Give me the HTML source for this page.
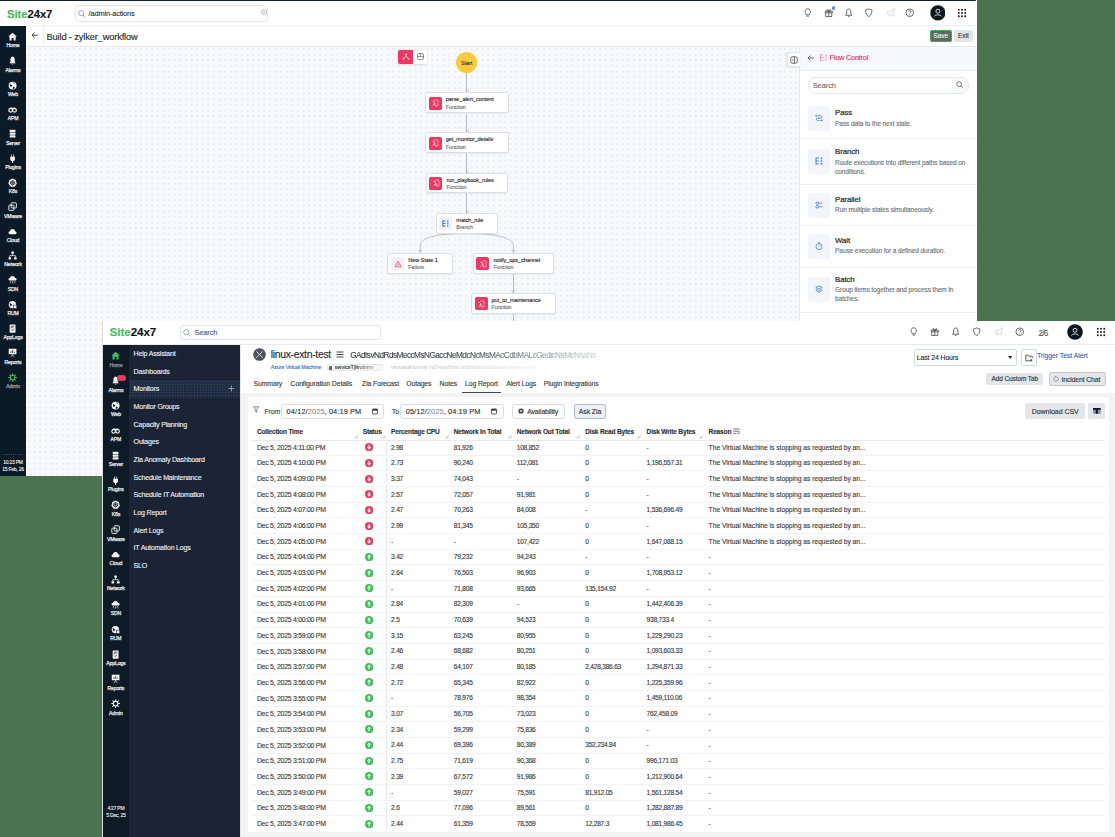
<!DOCTYPE html><html><head><meta charset="utf-8"><style>
html,body{margin:0;padding:0;}
body{width:1115px;height:837px;overflow:hidden;position:relative;background:#49744f;font-family:"Liberation Sans",sans-serif;}
.t{position:absolute;white-space:nowrap;-webkit-text-stroke-width:0.12px;}
.r{position:absolute;box-sizing:border-box;}
.dots{background-color:#f7f9fc;background-image:radial-gradient(circle at 50% 50%, #b9bec6 0.55px, rgba(185,190,198,0) 0.95px);background-size:5.59px 5.59px;}
</style></head><body>

<div class="r" style="left:0.00px;top:0.00px;width:977.00px;height:476.00px;background:#fff"></div>
<div class="r" style="left:0.00px;top:0.00px;width:976.00px;height:1.40px;background:#17212c;border-radius:0 0 2px 0"></div>
<div class="r" style="left:26.00px;top:24.80px;width:951.00px;height:1.00px;background:#eceef1"></div>
<div class="t" style="left:6.90px;top:9.00px;font-size:11.3px;line-height:11.3px;color:#111;font-weight:700;letter-spacing:-0.05px;"><span style="color:#3fbb5c">Site</span><span style="color:#111">24x7</span></div>
<div class="r" style="left:74.70px;top:5.20px;width:193.80px;height:16.50px;background:#fff;border:1px solid #e4e6e9;border-radius:3.5px"></div>
<svg class="r" style="left:78.00px;top:9.60px;" width="7.6" height="7.6" viewBox="0 0 7.6 7.6"><circle cx="3.2" cy="3.2" r="2.5" fill="none" stroke="#8a8f96" stroke-width="0.8"/><path d="M5 5 L7 7" stroke="#8a8f96" stroke-width="0.8"/></svg>
<div class="t" style="left:88.60px;top:10.00px;font-size:7.4px;line-height:7.4px;color:#2b2f34;font-weight:400;letter-spacing:-0.15px;">/admin-actions</div>
<svg class="r" style="left:260.50px;top:9.40px;" width="6.4" height="6.4" viewBox="0 0 6.4 6.4"><circle cx="3.2" cy="3.2" r="2.6" fill="none" stroke="#9a9ea4" stroke-width="0.7"/><path d="M2.2 2.2 L4.2 4.2 M4.2 2.2 L2.2 4.2" stroke="#9a9ea4" stroke-width="0.6"/></svg>
<svg class="r" style="left:803.15px;top:8.05px;" width="9.5" height="9.5" viewBox="0 0 10 10"><path d="M3.4 7.2 C3.4 6 2.2 5.4 2.2 3.6 C2.2 2 3.4 0.8 5 0.8 C6.6 0.8 7.8 2 7.8 3.6 C7.8 5.4 6.6 6 6.6 7.2 Z M3.8 8.6 H6.2" fill="none" stroke="#3a3f45" stroke-width="0.8"/></svg>
<svg class="r" style="left:824.05px;top:8.05px;" width="9.5" height="9.5" viewBox="0 0 10 10"><path d="M1.2 3.4 H8.8 V5 H1.2Z M1.8 5 V9 H8.2 V5 M5 3.4 V9 M5 3.4 C4 1 2.6 1.4 3 2.6 C3.2 3.2 4.4 3.4 5 3.4 C5.6 3.4 6.8 3.2 7 2.6 C7.4 1.4 6 1 5 3.4" fill="none" stroke="#3a3f45" stroke-width="0.8"/></svg>
<svg class="r" style="left:844.35px;top:8.05px;" width="9.5" height="9.5" viewBox="0 0 10 10"><path d="M5 1 C3.2 1.2 2.8 2.6 2.8 4.2 L2.8 6.2 L1.6 7.6 L8.4 7.6 L7.2 6.2 L7.2 4.2 C7.2 2.6 6.8 1.2 5 1Z M4 8.6 C4.4 9.2 5.6 9.2 6 8.6" fill="none" stroke="#3a3f45" stroke-width="0.8"/></svg>
<svg class="r" style="left:864.45px;top:8.05px;" width="9.5" height="9.5" viewBox="0 0 10 10"><path d="M5 0.9 L8.4 2.2 C8.4 5.6 7.2 7.8 5 9.1 C2.8 7.8 1.6 5.6 1.6 2.2 Z" fill="none" stroke="#3a3f45" stroke-width="0.8"/></svg>
<svg class="r" style="left:885.75px;top:8.05px;" width="9.5" height="9.5" viewBox="0 0 10 10"><path d="M1.4 4 L1.4 6.4 L3 6.4 L7.6 8.6 L7.6 1.8 L3 4 Z M3 6.4 L3.8 9" fill="none" stroke="#cfd2d6" stroke-width="0.8"/><circle cx="8.6" cy="1.2" r="1.1" fill="#d9dce0"/></svg>
<svg class="r" style="left:905.35px;top:8.05px;" width="9.5" height="9.5" viewBox="0 0 10 10"><circle cx="5" cy="5" r="4" fill="none" stroke="#3a3f45" stroke-width="0.8"/><path d="M3.7 3.9 C3.7 2.4 6.3 2.4 6.3 3.9 C6.3 4.9 5 4.9 5 6" fill="none" stroke="#3a3f45" stroke-width="0.8"/><circle cx="5" cy="7.3" r="0.5" fill="#3a3f45"/></svg>
<div class="r" style="left:831.8px;top:6.2px;width:3.4px;height:3.4px;border-radius:50%;background:#5b8de8"></div>
<svg class="r" style="left:929.50px;top:4.90px;" width="15.8" height="15.8" viewBox="0 0 15.8 15.8"><circle cx="7.9" cy="7.9" r="7.6" fill="#0c141c" stroke="#3f9a55" stroke-width="0.5" stroke-dasharray="1 1"/><circle cx="7.9" cy="6.2" r="2" fill="none" stroke="#fff" stroke-width="0.8"/><path d="M4.4 11.4 C4.6 9.4 11.2 9.4 11.4 11.4" fill="none" stroke="#fff" stroke-width="0.8"/></svg>
<svg class="r" style="left:956.80px;top:7.90px;" width="10" height="10" viewBox="0 0 10 10"><circle cx="1.8" cy="1.8" r="0.95" fill="#111"/><circle cx="1.8" cy="5.0" r="0.95" fill="#111"/><circle cx="1.8" cy="8.2" r="0.95" fill="#111"/><circle cx="5.0" cy="1.8" r="0.95" fill="#111"/><circle cx="5.0" cy="5.0" r="0.95" fill="#111"/><circle cx="5.0" cy="8.2" r="0.95" fill="#111"/><circle cx="8.2" cy="1.8" r="0.95" fill="#111"/><circle cx="8.2" cy="5.0" r="0.95" fill="#111"/><circle cx="8.2" cy="8.2" r="0.95" fill="#111"/></svg>
<div class="r" style="left:0.00px;top:26.00px;width:26.00px;height:450.00px;background:#0b1a26"></div>
<svg class="r" style="left:8.40px;top:31.80px;" width="9.2" height="9.2" viewBox="0 0 10 10"><path d="M5 0.8 L9.6 4.9 L8.3 4.9 L8.3 9.2 L6.1 9.2 L6.1 6.6 L3.9 6.6 L3.9 9.2 L1.7 9.2 L1.7 4.9 L0.4 4.9 Z" fill="#f2f3f4"/></svg>
<div class="t" style="left:-2.00px;width:30px;text-align:center;top:43.00px;font-size:5.1px;line-height:5.1px;color:#e9ebed;font-weight:400;letter-spacing:-0.15px;-webkit-text-stroke-width:0.25px;">Home</div>
<svg class="r" style="left:8.40px;top:56.16px;" width="9.2" height="9.2" viewBox="0 0 10 10"><path d="M5 0.6 C3.2 0.9 2.6 2.4 2.6 4.2 L2.6 6.4 L1.4 7.9 L8.6 7.9 L7.4 6.4 L7.4 4.2 C7.4 2.4 6.8 0.9 5 0.6 Z M3.9 8.5 L6.1 8.5 C6 9.4 4 9.4 3.9 8.5Z" fill="#f2f3f4"/></svg>
<div class="t" style="left:-2.00px;width:30px;text-align:center;top:68.00px;font-size:5.1px;line-height:5.1px;color:#e9ebed;font-weight:400;letter-spacing:-0.15px;-webkit-text-stroke-width:0.25px;">Alarms</div>
<svg class="r" style="left:8.40px;top:80.52px;" width="9.2" height="9.2" viewBox="0 0 10 10"><circle cx="5" cy="5" r="4.3" fill="#f2f3f4"/><path d="M2.2 3.2 C3.2 3.4 3.6 4.3 4.6 4.6 C4.6 5.6 3.6 5.8 3.2 6.8 C2.4 6 1.8 4.4 2.2 3.2Z M6 1.4 C5.6 2.4 6.4 3 7.4 2.8 C7.8 2.6 6.8 1.6 6 1.4Z M5.6 6.2 C6.6 6.2 7.6 6.6 7.4 7.6 C6.8 8.4 5.8 8.8 5.2 8.6 C5.6 7.8 5 7 5.6 6.2Z" fill="#0b1a26"/></svg>
<div class="t" style="left:-2.00px;width:30px;text-align:center;top:92.00px;font-size:5.1px;line-height:5.1px;color:#e9ebed;font-weight:400;letter-spacing:-0.15px;-webkit-text-stroke-width:0.25px;">Web</div>
<svg class="r" style="left:8.40px;top:104.88px;" width="9.2" height="9.2" viewBox="0 0 10 10"><g fill="none" stroke="#f2f3f4" stroke-width="1.3"><circle cx="2.9" cy="5.8" r="2"/><circle cx="7.1" cy="5.8" r="2"/></g><path d="M1.2 4.6 C1.6 2.8 3 2.4 5 3.2 C7 2.4 8.4 2.8 8.8 4.6 L5 4.4Z" fill="#f2f3f4"/></svg>
<div class="t" style="left:-2.00px;width:30px;text-align:center;top:116.00px;font-size:5.1px;line-height:5.1px;color:#e9ebed;font-weight:400;letter-spacing:-0.15px;-webkit-text-stroke-width:0.25px;">APM</div>
<svg class="r" style="left:8.40px;top:129.24px;" width="9.2" height="9.2" viewBox="0 0 10 10"><g fill="#f2f3f4"><rect x="1.8" y="0.8" width="6.4" height="2.4" rx="0.7"/><rect x="1.8" y="3.8" width="6.4" height="2.4" rx="0.7"/><rect x="1.8" y="6.8" width="6.4" height="2.4" rx="0.7"/></g></svg>
<div class="t" style="left:-2.00px;width:30px;text-align:center;top:141.00px;font-size:5.1px;line-height:5.1px;color:#e9ebed;font-weight:400;letter-spacing:-0.15px;-webkit-text-stroke-width:0.25px;">Server</div>
<svg class="r" style="left:8.40px;top:153.60px;" width="9.2" height="9.2" viewBox="0 0 10 10"><path d="M3.4 0.6 L3.4 3 L2.4 3 L2.4 5.6 C2.4 6.8 3.4 7.4 4.4 7.6 L4.4 9.6 L5.6 9.6 L5.6 7.6 C6.6 7.4 7.6 6.8 7.6 5.6 L7.6 3 L6.6 3 L6.6 0.6 L5.8 0.6 L5.8 3 L4.2 3 L4.2 0.6Z" fill="#f2f3f4"/></svg>
<div class="t" style="left:-2.00px;width:30px;text-align:center;top:165.00px;font-size:5.1px;line-height:5.1px;color:#e9ebed;font-weight:400;letter-spacing:-0.15px;-webkit-text-stroke-width:0.25px;">Plugins</div>
<svg class="r" style="left:8.40px;top:177.96px;" width="9.2" height="9.2" viewBox="0 0 10 10"><path d="M5 0.5 L8.6 2.3 L9.5 6.2 L7 9.4 L3 9.4 L0.5 6.2 L1.4 2.3Z" fill="#f2f3f4"/><circle cx="5" cy="5.2" r="2.2" fill="none" stroke="#0b1a26" stroke-width="0.8"/><path d="M5 2 L5 8.4 M2 4.2 L8 6.2 M8 4.2 L2 6.2" stroke="#0b1a26" stroke-width="0.6"/></svg>
<div class="t" style="left:-2.00px;width:30px;text-align:center;top:189.00px;font-size:5.1px;line-height:5.1px;color:#e9ebed;font-weight:400;letter-spacing:-0.15px;-webkit-text-stroke-width:0.25px;">K8s</div>
<svg class="r" style="left:8.40px;top:202.32px;" width="9.2" height="9.2" viewBox="0 0 10 10"><g fill="none" stroke="#f2f3f4" stroke-width="1"><rect x="3.5" y="0.9" width="5.6" height="5.6" rx="0.6"/><rect x="0.9" y="3.5" width="5.6" height="5.6" rx="0.6"/></g></svg>
<div class="t" style="left:-2.00px;width:30px;text-align:center;top:214.00px;font-size:5.1px;line-height:5.1px;color:#e9ebed;font-weight:400;letter-spacing:-0.15px;-webkit-text-stroke-width:0.25px;">VMware</div>
<svg class="r" style="left:8.40px;top:226.68px;" width="9.2" height="9.2" viewBox="0 0 10 10"><path d="M2.6 8 C1.2 8 0.6 7 0.6 6.2 C0.6 5.2 1.4 4.6 2.2 4.6 C2.4 3 3.6 2.2 5 2.2 C6.6 2.2 7.6 3.4 7.8 4.6 C8.8 4.6 9.4 5.4 9.4 6.3 C9.4 7.2 8.7 8 7.6 8Z" fill="#f2f3f4"/></svg>
<div class="t" style="left:-2.00px;width:30px;text-align:center;top:238.00px;font-size:5.1px;line-height:5.1px;color:#e9ebed;font-weight:400;letter-spacing:-0.15px;-webkit-text-stroke-width:0.25px;">Cloud</div>
<svg class="r" style="left:8.40px;top:251.04px;" width="9.2" height="9.2" viewBox="0 0 10 10"><g fill="#f2f3f4"><rect x="3.6" y="0.6" width="2.8" height="2.4"/><rect x="0.6" y="6.8" width="2.8" height="2.4"/><rect x="6.6" y="6.8" width="2.8" height="2.4"/></g><path d="M5 3 L5 5 M2 6.8 L2 5 L8 5 L8 6.8" fill="none" stroke="#f2f3f4" stroke-width="0.8"/></svg>
<div class="t" style="left:-2.00px;width:30px;text-align:center;top:262.00px;font-size:5.1px;line-height:5.1px;color:#e9ebed;font-weight:400;letter-spacing:-0.15px;-webkit-text-stroke-width:0.25px;">Network</div>
<svg class="r" style="left:8.40px;top:275.40px;" width="9.2" height="9.2" viewBox="0 0 10 10"><path d="M2.4 6 C1.2 6 0.6 5.2 0.6 4.5 C0.6 3.7 1.2 3.2 2 3.2 C2.2 1.8 3.4 1 4.8 1 C6.4 1 7.4 2 7.6 3.2 C8.6 3.2 9.4 3.8 9.4 4.6 C9.4 5.4 8.8 6 7.8 6Z" fill="#f2f3f4"/><path d="M3 6.4 L2.4 9 M5 6.4 L5 9.4 M7 6.4 L7.6 9" stroke="#f2f3f4" stroke-width="0.7"/></svg>
<div class="t" style="left:-2.00px;width:30px;text-align:center;top:287.00px;font-size:5.1px;line-height:5.1px;color:#e9ebed;font-weight:400;letter-spacing:-0.15px;-webkit-text-stroke-width:0.25px;">SDN</div>
<svg class="r" style="left:8.40px;top:299.76px;" width="9.2" height="9.2" viewBox="0 0 10 10"><circle cx="4.8" cy="5" r="4" fill="#f2f3f4"/><path d="M2 3.4 C3 3.6 3.6 4.6 4.4 4.8 C4.2 6 3.2 6 2.8 7 C2 6 1.6 4.6 2 3.4Z" fill="#0b1a26"/><rect x="6" y="5.6" width="3.6" height="3.6" fill="#f2f3f4" stroke="#0b1a26" stroke-width="0.6"/></svg>
<div class="t" style="left:-2.00px;width:30px;text-align:center;top:311.00px;font-size:5.1px;line-height:5.1px;color:#e9ebed;font-weight:400;letter-spacing:-0.15px;-webkit-text-stroke-width:0.25px;">RUM</div>
<svg class="r" style="left:8.40px;top:324.12px;" width="9.2" height="9.2" viewBox="0 0 10 10"><rect x="1.8" y="0.6" width="6.4" height="8.8" rx="0.6" fill="#f2f3f4"/><path d="M3 2.4 H7 M3 4 H5.5 M3.4 6.2 L4.4 7.2 L6.6 5.2" stroke="#0b1a26" stroke-width="0.7" fill="none"/></svg>
<div class="t" style="left:-2.00px;width:30px;text-align:center;top:335.00px;font-size:5.1px;line-height:5.1px;color:#e9ebed;font-weight:400;letter-spacing:-0.15px;-webkit-text-stroke-width:0.25px;">AppLogs</div>
<svg class="r" style="left:8.40px;top:348.48px;" width="9.2" height="9.2" viewBox="0 0 10 10"><rect x="0.8" y="0.8" width="8.4" height="6" fill="#f2f3f4"/><path d="M3.2 5.4 L3.2 3.6 M5 5.4 L5 2.2 M6.8 5.4 L6.8 4" stroke="#0b1a26" stroke-width="0.8"/><path d="M5 6.8 L5 8 M3 9.6 L5 7.8 L7 9.6" stroke="#f2f3f4" stroke-width="0.8" fill="none"/></svg>
<div class="t" style="left:-2.00px;width:30px;text-align:center;top:360.00px;font-size:5.1px;line-height:5.1px;color:#e9ebed;font-weight:400;letter-spacing:-0.15px;-webkit-text-stroke-width:0.25px;">Reports</div>
<svg class="r" style="left:8.40px;top:372.84px;" width="9.2" height="9.2" viewBox="0 0 10 10"><g stroke="#3dbb5a" stroke-width="1.1" stroke-linecap="round"><line x1="7.60" y1="5.00" x2="9.30" y2="5.00"/><line x1="6.84" y1="6.84" x2="8.04" y2="8.04"/><line x1="5.00" y1="7.60" x2="5.00" y2="9.30"/><line x1="3.16" y1="6.84" x2="1.96" y2="8.04"/><line x1="2.40" y1="5.00" x2="0.70" y2="5.00"/><line x1="3.16" y1="3.16" x2="1.96" y2="1.96"/><line x1="5.00" y1="2.40" x2="5.00" y2="0.70"/><line x1="6.84" y1="3.16" x2="8.04" y2="1.96"/></g><circle cx="5" cy="5" r="2.5" fill="none" stroke="#3dbb5a" stroke-width="1.1"/></svg>
<div class="t" style="left:-2.00px;width:30px;text-align:center;top:384.00px;font-size:5.1px;line-height:5.1px;color:#9aa3ab;font-weight:400;letter-spacing:-0.15px;-webkit-text-stroke-width:0.25px;">Admin</div>
<div class="r" style="left:3.00px;top:454.40px;width:20.00px;height:0.80px;background-image:linear-gradient(90deg,#3a4a58 50%,transparent 50%);background-size:2px 1px"></div>
<div class="t" style="left:-2.00px;width:30px;text-align:center;top:460.00px;font-size:5px;line-height:5px;color:#f0f0f0;font-weight:400;letter-spacing:-0.25px;">10:23 PM</div>
<div class="t" style="left:-2.00px;width:30px;text-align:center;top:467.00px;font-size:5px;line-height:5px;color:#f0f0f0;font-weight:400;letter-spacing:-0.25px;">15 Feb, 26</div>
<div class="r" style="left:26.00px;top:46.00px;width:951.00px;height:0.80px;background:#e6e9ed"></div>
<div class="r" style="left:43.30px;top:26.00px;width:0.80px;height:20.00px;background:#eceef1"></div>
<svg class="r" style="left:30.80px;top:32.40px;" width="7.4" height="6.4" viewBox="0 0 7.4 6.4"><path d="M6.8 3.2 H1 M3.6 0.6 L1 3.2 L3.6 5.8" fill="none" stroke="#2b2f33" stroke-width="0.9"/></svg>
<div class="t" style="left:46.50px;top:33.00px;font-size:9.3px;line-height:9.3px;color:#24282c;font-weight:400;letter-spacing:-0.15px;">Build - zylker_workflow</div>
<div class="r" style="left:930.00px;top:29.80px;width:21.50px;height:11.90px;background:#5d6b61;border:1px dotted #3bd35e;border-radius:2px"></div>
<div class="t" style="left:929.75px;width:22px;text-align:center;top:33.00px;font-size:6.4px;line-height:6.4px;color:#f2f2f2;font-weight:400;letter-spacing:0px;">Save</div>
<div class="r" style="left:954.30px;top:29.90px;width:18.30px;height:11.80px;background:#e4e5e7;border-radius:2px"></div>
<div class="t" style="left:953.45px;width:20px;text-align:center;top:33.00px;font-size:6.4px;line-height:6.4px;color:#333;font-weight:400;letter-spacing:0px;">Exit</div>
<div class="r" style="left:26.00px;top:46.80px;width:774.00px;height:429.20px;background-color:#f7f9fc"></div>
<svg class="r" style="left:26px;top:46.8px" width="774" height="429.2"><defs><pattern id="dp" x="0.3" y="-0.9" width="5.6" height="5.6" patternUnits="userSpaceOnUse"><circle cx="2.8" cy="2.8" r="0.55" fill="#b4b9c0"/></pattern></defs><rect width="774" height="429.2" fill="url(#dp)"/></svg>
<div class="r" style="left:398.30px;top:50.20px;width:28.90px;height:13.50px;background:#fff;border-radius:2px;box-shadow:0 0.5px 2px rgba(0,0,0,0.12)"></div>
<div class="r" style="left:398.30px;top:50.20px;width:14.60px;height:13.50px;background:#ea3a63;border-radius:2px 0 0 2px"></div>
<svg class="r" style="left:401.60px;top:53.40px;" width="8" height="7" viewBox="0 0 8 7"><path d="M4 1 V3.4 M4 3.4 L1.6 5.6 M4 3.4 L6.4 5.6" stroke="#fff" stroke-width="0.7" fill="none"/><circle cx="4" cy="1.2" r="0.8" fill="#fff"/><circle cx="1.4" cy="5.8" r="0.8" fill="#fff"/><circle cx="6.6" cy="5.8" r="0.8" fill="#fff"/></svg>
<svg class="r" style="left:416.60px;top:53.40px;" width="7" height="7" viewBox="0 0 7 7"><rect x="0.6" y="0.6" width="5.8" height="5.8" rx="0.8" fill="none" stroke="#555" stroke-width="0.7"/><path d="M0.6 3.5 H6.4 M3.5 0.6 V3.5" stroke="#555" stroke-width="0.6"/></svg>
<div class="r" style="left:466.25px;top:73.00px;width:0.90px;height:19.60px;background:#b9bdc3"></div>
<svg class="r" style="left:464.50px;top:89.20px;" width="4.4" height="3.4" viewBox="0 0 4.4 3.4"><path d="M0.4 0.4 L2.2 3 L4 0.4" fill="none" stroke="#b9bdc3" stroke-width="0.9"/></svg>
<div class="r" style="left:466.25px;top:113.50px;width:0.90px;height:19.10px;background:#b9bdc3"></div>
<svg class="r" style="left:464.50px;top:129.20px;" width="4.4" height="3.4" viewBox="0 0 4.4 3.4"><path d="M0.4 0.4 L2.2 3 L4 0.4" fill="none" stroke="#b9bdc3" stroke-width="0.9"/></svg>
<div class="r" style="left:466.45px;top:153.40px;width:0.90px;height:19.50px;background:#b9bdc3"></div>
<svg class="r" style="left:464.70px;top:169.50px;" width="4.4" height="3.4" viewBox="0 0 4.4 3.4"><path d="M0.4 0.4 L2.2 3 L4 0.4" fill="none" stroke="#b9bdc3" stroke-width="0.9"/></svg>
<div class="r" style="left:466.45px;top:193.30px;width:0.90px;height:19.60px;background:#b9bdc3"></div>
<svg class="r" style="left:464.70px;top:209.50px;" width="4.4" height="3.4" viewBox="0 0 4.4 3.4"><path d="M0.4 0.4 L2.2 3 L4 0.4" fill="none" stroke="#b9bdc3" stroke-width="0.9"/></svg>
<svg class="r" style="left:410.00px;top:230.00px;" width="115" height="25" viewBox="0 0 115 25"><path d="M56 3.5 Q10.2 3.5 10.2 16 L10.2 22.5 M56 3.5 Q103.5 3.5 103.5 16 L103.5 22.5" fill="none" stroke="#b9bdc3" stroke-width="0.9"/><path d="M8.4 19.6 L10.2 22.3 L12 19.6 M101.7 19.6 L103.5 22.3 L105.3 19.6" fill="none" stroke="#b9bdc3" stroke-width="0.9"/></svg>
<div class="r" style="left:513.05px;top:273.70px;width:0.90px;height:19.40px;background:#b9bdc3"></div>
<svg class="r" style="left:511.30px;top:289.70px;" width="4.4" height="3.4" viewBox="0 0 4.4 3.4"><path d="M0.4 0.4 L2.2 3 L4 0.4" fill="none" stroke="#b9bdc3" stroke-width="0.9"/></svg>
<div class="r" style="left:513.05px;top:313.90px;width:0.90px;height:16.10px;background:#b9bdc3"></div>
<svg class="r" style="left:456.10px;top:51.90px;" width="21.2" height="21.2" viewBox="0 0 21.2 21.2"><circle cx="10.6" cy="10.6" r="10.6" fill="#fdc93e"/></svg>
<div class="t" style="left:454.70px;width:24px;text-align:center;top:61.00px;font-size:5.6px;line-height:5.6px;color:#283548;font-weight:400;letter-spacing:-0.1px;">Start</div>
<div class="r" style="left:425.00px;top:92.40px;width:83.80px;height:21.10px;background:#fff;border:1px solid #dcdfe4;border-radius:2.5px;box-shadow:0 0.5px 1.5px rgba(0,0,0,0.06)"></div>
<div class="r" style="left:428.70px;top:96.60px;width:13.10px;height:13.20px;background:#ea3a63;border-radius:1.8px"></div>
<svg class="r" style="left:431.20px;top:99.10px;" width="8" height="8" viewBox="0 0 8 8"><path d="M3.2 1 H7 V7 H3.6" fill="none" stroke="#fff" stroke-width="0.7" stroke-dasharray="1 0.5"/><path d="M1.6 2.4 C3 2.2 3.4 2.8 3.8 4.6 C4 5.8 4.2 6.4 5.2 6.4 M4 4 L1.8 6.6" fill="none" stroke="#fff" stroke-width="0.8"/></svg>
<div class="t" style="left:445.80px;top:97.00px;font-size:5.6px;line-height:5.6px;color:#1f2226;font-weight:400;letter-spacing:-0.08px;">parse_alert_content</div>
<div class="t" style="left:445.80px;top:105.00px;font-size:5.3px;line-height:5.3px;color:#666b71;font-weight:400;letter-spacing:-0.05px;">Function</div>
<div class="r" style="left:425.00px;top:132.40px;width:83.80px;height:21.00px;background:#fff;border:1px solid #dcdfe4;border-radius:2.5px;box-shadow:0 0.5px 1.5px rgba(0,0,0,0.06)"></div>
<div class="r" style="left:428.70px;top:136.60px;width:13.10px;height:13.20px;background:#ea3a63;border-radius:1.8px"></div>
<svg class="r" style="left:431.20px;top:139.10px;" width="8" height="8" viewBox="0 0 8 8"><path d="M3.2 1 H7 V7 H3.6" fill="none" stroke="#fff" stroke-width="0.7" stroke-dasharray="1 0.5"/><path d="M1.6 2.4 C3 2.2 3.4 2.8 3.8 4.6 C4 5.8 4.2 6.4 5.2 6.4 M4 4 L1.8 6.6" fill="none" stroke="#fff" stroke-width="0.8"/></svg>
<div class="t" style="left:445.80px;top:137.00px;font-size:5.6px;line-height:5.6px;color:#1f2226;font-weight:400;letter-spacing:-0.08px;">get_monitor_details</div>
<div class="t" style="left:445.80px;top:145.00px;font-size:5.3px;line-height:5.3px;color:#666b71;font-weight:400;letter-spacing:-0.05px;">Function</div>
<div class="r" style="left:425.60px;top:172.70px;width:82.90px;height:20.60px;background:#fff;border:1px solid #dcdfe4;border-radius:2.5px;box-shadow:0 0.5px 1.5px rgba(0,0,0,0.06)"></div>
<div class="r" style="left:429.30px;top:176.90px;width:13.10px;height:13.20px;background:#ea3a63;border-radius:1.8px"></div>
<svg class="r" style="left:431.80px;top:179.40px;" width="8" height="8" viewBox="0 0 8 8"><path d="M3.2 1 H7 V7 H3.6" fill="none" stroke="#fff" stroke-width="0.7" stroke-dasharray="1 0.5"/><path d="M1.6 2.4 C3 2.2 3.4 2.8 3.8 4.6 C4 5.8 4.2 6.4 5.2 6.4 M4 4 L1.8 6.6" fill="none" stroke="#fff" stroke-width="0.8"/></svg>
<div class="t" style="left:446.40px;top:178.00px;font-size:5.6px;line-height:5.6px;color:#1f2226;font-weight:400;letter-spacing:-0.08px;">run_playbook_rules</div>
<div class="t" style="left:446.40px;top:185.00px;font-size:5.3px;line-height:5.3px;color:#666b71;font-weight:400;letter-spacing:-0.05px;">Function</div>
<div class="r" style="left:435.50px;top:212.70px;width:62.70px;height:21.00px;background:#fff;border:1px solid #dcdfe4;border-radius:2.5px;box-shadow:0 0.5px 1.5px rgba(0,0,0,0.06)"></div>
<div class="r" style="left:439.20px;top:216.90px;width:12.60px;height:13.20px;background:#eff1f4;border-radius:1.8px"></div>
<svg class="r" style="left:442.00px;top:220.10px;" width="7" height="7" viewBox="0 0 7 7"><g fill="#4b7bd0"><rect x="0.5" y="0.5" width="3" height="1"/><rect x="0.5" y="0.5" width="1" height="6"/><rect x="0.5" y="3" width="3" height="1"/><rect x="0.5" y="5.5" width="3" height="1"/><rect x="5" y="0.5" width="1.4" height="1.4"/><rect x="5" y="2.8" width="1.4" height="1.4"/><rect x="5" y="5.2" width="1.4" height="1.4"/></g></svg>
<div class="t" style="left:456.30px;top:218.00px;font-size:5.6px;line-height:5.6px;color:#1f2226;font-weight:400;letter-spacing:-0.08px;">match_rule</div>
<div class="t" style="left:456.30px;top:225.00px;font-size:5.3px;line-height:5.3px;color:#666b71;font-weight:400;letter-spacing:-0.05px;">Branch</div>
<div class="r" style="left:387.40px;top:252.90px;width:65.60px;height:20.80px;background:#fff;border:1px solid #dcdfe4;border-radius:2.5px;box-shadow:0 0.5px 1.5px rgba(0,0,0,0.06)"></div>
<div class="r" style="left:391.10px;top:257.10px;width:13.10px;height:13.20px;background:#eff1f4;border-radius:1.8px"></div>
<svg class="r" style="left:393.60px;top:259.60px;" width="8" height="8" viewBox="0 0 8 8"><path d="M4 1 L7.2 6.8 H0.8 Z" fill="none" stroke="#e35a78" stroke-width="0.8" stroke-linejoin="round"/><circle cx="4" cy="4.6" r="0.9" fill="none" stroke="#e35a78" stroke-width="0.6"/></svg>
<div class="t" style="left:408.20px;top:258.00px;font-size:5.6px;line-height:5.6px;color:#1f2226;font-weight:400;letter-spacing:-0.08px;">New State 1</div>
<div class="t" style="left:408.20px;top:265.00px;font-size:5.3px;line-height:5.3px;color:#666b71;font-weight:400;letter-spacing:-0.05px;">Failure</div>
<div class="r" style="left:472.60px;top:252.90px;width:81.80px;height:20.80px;background:#fff;border:1px solid #dcdfe4;border-radius:2.5px;box-shadow:0 0.5px 1.5px rgba(0,0,0,0.06)"></div>
<div class="r" style="left:476.30px;top:257.10px;width:13.10px;height:13.20px;background:#ea3a63;border-radius:1.8px"></div>
<svg class="r" style="left:478.80px;top:259.60px;" width="8" height="8" viewBox="0 0 8 8"><path d="M3.2 1 H7 V7 H3.6" fill="none" stroke="#fff" stroke-width="0.7" stroke-dasharray="1 0.5"/><path d="M1.6 2.4 C3 2.2 3.4 2.8 3.8 4.6 C4 5.8 4.2 6.4 5.2 6.4 M4 4 L1.8 6.6" fill="none" stroke="#fff" stroke-width="0.8"/></svg>
<div class="t" style="left:493.40px;top:258.00px;font-size:5.6px;line-height:5.6px;color:#1f2226;font-weight:400;letter-spacing:-0.08px;">notify_ops_channel</div>
<div class="t" style="left:493.40px;top:265.00px;font-size:5.3px;line-height:5.3px;color:#666b71;font-weight:400;letter-spacing:-0.05px;">Function</div>
<div class="r" style="left:470.80px;top:292.90px;width:85.40px;height:21.00px;background:#fff;border:1px solid #dcdfe4;border-radius:2.5px;box-shadow:0 0.5px 1.5px rgba(0,0,0,0.06)"></div>
<div class="r" style="left:474.50px;top:297.10px;width:13.10px;height:13.20px;background:#ea3a63;border-radius:1.8px"></div>
<svg class="r" style="left:477.00px;top:299.60px;" width="8" height="8" viewBox="0 0 8 8"><path d="M3.2 1 H7 V7 H3.6" fill="none" stroke="#fff" stroke-width="0.7" stroke-dasharray="1 0.5"/><path d="M1.6 2.4 C3 2.2 3.4 2.8 3.8 4.6 C4 5.8 4.2 6.4 5.2 6.4 M4 4 L1.8 6.6" fill="none" stroke="#fff" stroke-width="0.8"/></svg>
<div class="t" style="left:491.60px;top:298.00px;font-size:5.6px;line-height:5.6px;color:#1f2226;font-weight:400;letter-spacing:-0.08px;">put_to_maintenance</div>
<div class="t" style="left:491.60px;top:305.00px;font-size:5.3px;line-height:5.3px;color:#666b71;font-weight:400;letter-spacing:-0.05px;">Function</div>
<div class="r" style="left:799.40px;top:46.80px;width:177.60px;height:429.20px;background:#fff;border-left:1px solid #e4e7eb"></div>
<div class="r" style="left:800.40px;top:46.80px;width:176.60px;height:24.00px;background:#f6f8fb;border-bottom:1px solid #e8ebef"></div>
<div class="r" style="left:787.00px;top:51.80px;width:13.40px;height:15.10px;background:#fff;border:1px solid #e1e4e8;border-right:none;border-radius:3px 0 0 3px;box-shadow:-0.5px 0.5px 1.5px rgba(0,0,0,0.08)"></div>
<svg class="r" style="left:789.60px;top:56.00px;" width="8" height="8" viewBox="0 0 8 8"><rect x="0.8" y="0.8" width="6.4" height="6.4" rx="1.6" fill="none" stroke="#555" stroke-width="0.9"/><path d="M4.4 0.8 V7.2" stroke="#555" stroke-width="0.9"/><path d="M2.2 4 L3.2 3 M2.2 4 L3.2 5" stroke="#555" stroke-width="0.6"/></svg>
<svg class="r" style="left:806.80px;top:55.30px;" width="7.2" height="6" viewBox="0 0 7.2 6"><path d="M6.6 3 H1 M3.4 0.6 L1 3 L3.4 5.4" fill="none" stroke="#444" stroke-width="0.8"/></svg>
<svg class="r" style="left:819.60px;top:54.20px;" width="7.4" height="7.2" viewBox="0 0 7.4 7.2"><g fill="#e56482"><rect x="0.4" y="0.6" width="3" height="0.6"/><rect x="0.4" y="0.6" width="0.6" height="6"/><rect x="0.4" y="3.3" width="3" height="0.6"/><rect x="0.4" y="6" width="3" height="0.6"/><rect x="5.6" y="0.5" width="0.9" height="1.4"/><rect x="5.6" y="2.8" width="0.9" height="1.4"/><rect x="5.6" y="5.1" width="0.9" height="1.4"/></g></svg>
<div class="t" style="left:829.50px;top:54.00px;font-size:7.5px;line-height:7.5px;color:#e0365c;font-weight:400;letter-spacing:-0.3px;">Flow Control</div>
<div class="r" style="left:808.00px;top:77.40px;width:160.70px;height:16.20px;background:#fff;border:1px solid #e3e6ea;border-radius:8px"></div>
<div class="r" style="left:951.80px;top:78.20px;width:16.10px;height:14.60px;background:#f7f8fa;border-radius:0 8px 8px 0"></div>
<svg class="r" style="left:956.00px;top:81.30px;" width="7.4" height="7.4" viewBox="0 0 7.4 7.4"><circle cx="3.2" cy="3.2" r="2.4" fill="none" stroke="#555" stroke-width="0.75"/><path d="M5 5 L6.8 6.8" stroke="#555" stroke-width="0.75"/></svg>
<div class="t" style="left:812.70px;top:82.00px;font-size:7.5px;line-height:7.5px;color:#6a6e73;font-weight:400;letter-spacing:-0.1px;">Search</div>
<div class="r" style="left:808.00px;top:105.50px;width:22.20px;height:25.00px;background:#f2f5f9;border-radius:3px"></div>
<svg class="r" style="left:815.00px;top:114.00px;" width="8" height="8" viewBox="0 0 8 8"><path d="M2.6 1.6 H5.4 A1.3 1.3 0 0 1 5.4 4.2 H4.8 M5.4 6.4 H2.6 A1.3 1.3 0 0 1 2.6 3.8 H3.2" fill="none" stroke="#4a7cd3" stroke-width="0.75"/><circle cx="1.2" cy="1.6" r="0.85" fill="#4a7cd3"/><circle cx="4" cy="4" r="0.85" fill="#4a7cd3"/><circle cx="6.8" cy="6.4" r="0.85" fill="#4a7cd3"/></svg>
<div class="t" style="left:835.10px;top:109.00px;font-size:7.8px;line-height:7.8px;color:#26292d;font-weight:400;letter-spacing:-0.1px;-webkit-text-stroke-width:0.22px;">Pass</div>
<div class="t" style="left:835.10px;top:121.00px;font-size:6.5px;line-height:6.5px;color:#6b7076;font-weight:400;letter-spacing:-0.08px;">Pass data to the next state.</div>
<div class="r" style="left:800.40px;top:138.20px;width:176.60px;height:0.90px;background:#eef0f3"></div>
<div class="r" style="left:808.00px;top:148.80px;width:22.20px;height:25.00px;background:#f2f5f9;border-radius:3px"></div>
<svg class="r" style="left:815.00px;top:157.30px;" width="8" height="8" viewBox="0 0 8 8"><g fill="#4a7cd3"><rect x="0.6" y="0.6" width="3.4" height="0.9"/><rect x="0.6" y="0.6" width="0.9" height="6.8"/><rect x="0.6" y="3.5" width="3.4" height="0.9"/><rect x="0.6" y="6.5" width="3.4" height="0.9"/><rect x="5.6" y="0.5" width="1.6" height="1.6"/><rect x="5.6" y="3.2" width="1.6" height="1.6"/><rect x="5.6" y="5.9" width="1.6" height="1.6"/></g></svg>
<div class="t" style="left:835.10px;top:148.00px;font-size:7.8px;line-height:7.8px;color:#26292d;font-weight:400;letter-spacing:-0.1px;-webkit-text-stroke-width:0.22px;">Branch</div>
<div class="t" style="left:835.10px;top:160.00px;font-size:6.5px;line-height:6.5px;color:#6b7076;font-weight:400;letter-spacing:-0.08px;">Route executions into different paths based on</div>
<div class="t" style="left:835.10px;top:169.00px;font-size:6.5px;line-height:6.5px;color:#6b7076;font-weight:400;letter-spacing:-0.08px;">conditions.</div>
<div class="r" style="left:800.40px;top:183.90px;width:176.60px;height:0.90px;background:#eef0f3"></div>
<div class="r" style="left:808.00px;top:192.50px;width:22.20px;height:25.00px;background:#f2f5f9;border-radius:3px"></div>
<svg class="r" style="left:815.00px;top:201.00px;" width="8" height="8" viewBox="0 0 8 8"><path d="M0.6 2.2 H7.4 M0.6 5.8 H7.4" stroke="#4a7cd3" stroke-width="0.8"/><circle cx="2.4" cy="2.2" r="1.3" fill="#f3f6fa" stroke="#4a7cd3" stroke-width="0.8"/><circle cx="2.4" cy="5.8" r="1.3" fill="#f3f6fa" stroke="#4a7cd3" stroke-width="0.8"/></svg>
<div class="t" style="left:835.10px;top:196.00px;font-size:7.8px;line-height:7.8px;color:#26292d;font-weight:400;letter-spacing:-0.1px;-webkit-text-stroke-width:0.22px;">Parallel</div>
<div class="t" style="left:835.10px;top:207.00px;font-size:6.5px;line-height:6.5px;color:#6b7076;font-weight:400;letter-spacing:-0.08px;">Run multiple states simultaneously.</div>
<div class="r" style="left:800.40px;top:225.20px;width:176.60px;height:0.90px;background:#eef0f3"></div>
<div class="r" style="left:808.00px;top:234.00px;width:22.20px;height:24.60px;background:#f2f5f9;border-radius:3px"></div>
<svg class="r" style="left:815.00px;top:242.30px;" width="8" height="8" viewBox="0 0 8 8"><circle cx="4" cy="4.6" r="3" fill="none" stroke="#4a7cd3" stroke-width="0.8"/><path d="M3 0.6 H5 M4 4.6 L5.2 3.4" stroke="#4a7cd3" stroke-width="0.8"/></svg>
<div class="t" style="left:835.10px;top:237.00px;font-size:7.8px;line-height:7.8px;color:#26292d;font-weight:400;letter-spacing:-0.1px;-webkit-text-stroke-width:0.22px;">Wait</div>
<div class="t" style="left:835.10px;top:248.00px;font-size:6.5px;line-height:6.5px;color:#6b7076;font-weight:400;letter-spacing:-0.08px;">Pause execution for a defined duration.</div>
<div class="r" style="left:800.40px;top:266.60px;width:176.60px;height:0.90px;background:#eef0f3"></div>
<div class="r" style="left:808.00px;top:277.20px;width:22.20px;height:24.40px;background:#f2f5f9;border-radius:3px"></div>
<svg class="r" style="left:815.00px;top:285.40px;" width="8" height="8" viewBox="0 0 8 8"><path d="M4 0.8 L7.2 2.4 L4 4 L0.8 2.4Z M0.8 4 L4 5.6 L7.2 4 M0.8 5.6 L4 7.2 L7.2 5.6" fill="none" stroke="#4a7cd3" stroke-width="0.75" stroke-linejoin="round"/></svg>
<div class="t" style="left:835.10px;top:276.00px;font-size:7.8px;line-height:7.8px;color:#26292d;font-weight:400;letter-spacing:-0.1px;-webkit-text-stroke-width:0.22px;">Batch</div>
<div class="t" style="left:835.10px;top:287.00px;font-size:6.5px;line-height:6.5px;color:#6b7076;font-weight:400;letter-spacing:-0.08px;">Group items together and process them in</div>
<div class="t" style="left:835.10px;top:296.00px;font-size:6.5px;line-height:6.5px;color:#6b7076;font-weight:400;letter-spacing:-0.08px;">batches.</div>
<div class="r" style="left:800.40px;top:312.30px;width:176.60px;height:0.90px;background:#eef0f3"></div>
<div class="r" style="left:103.00px;top:321.00px;width:1012.00px;height:516.00px;background:#fff"></div>
<div class="r" style="left:102.30px;top:321.00px;width:0.90px;height:516.00px;background:#d9dcd9"></div>
<div class="r" style="left:103.00px;top:344.20px;width:1012.00px;height:0.90px;background:#e8eaed"></div>
<div class="t" style="left:109.60px;top:326.00px;font-size:11.6px;line-height:11.6px;color:#111;font-weight:700;letter-spacing:-0.05px;"><span style="color:#3fbb5c">Site</span><span style="color:#111">24x7</span></div>
<div class="r" style="left:180.20px;top:324.70px;width:200.80px;height:15.50px;background:#fff;border:1px solid #e3e5e9;border-radius:3px"></div>
<svg class="r" style="left:183.00px;top:328.60px;" width="8" height="8" viewBox="0 0 8 8"><circle cx="3.3" cy="3.3" r="2.6" fill="none" stroke="#8a8f96" stroke-width="0.8"/><path d="M5.2 5.2 L7.4 7.4" stroke="#8a8f96" stroke-width="0.8"/></svg>
<div class="t" style="left:194.50px;top:329.00px;font-size:7.3px;line-height:7.3px;color:#55595e;font-weight:400;letter-spacing:-0.05px;">Search</div>
<svg class="r" style="left:909.15px;top:327.25px;" width="9.5" height="9.5" viewBox="0 0 10 10"><path d="M3.4 7.2 C3.4 6 2.2 5.4 2.2 3.6 C2.2 2 3.4 0.8 5 0.8 C6.6 0.8 7.8 2 7.8 3.6 C7.8 5.4 6.6 6 6.6 7.2 Z M3.8 8.6 H6.2" fill="none" stroke="#3a3f45" stroke-width="0.8"/></svg>
<svg class="r" style="left:930.35px;top:327.25px;" width="9.5" height="9.5" viewBox="0 0 10 10"><path d="M1.2 3.4 H8.8 V5 H1.2Z M1.8 5 V9 H8.2 V5 M5 3.4 V9 M5 3.4 C4 1 2.6 1.4 3 2.6 C3.2 3.2 4.4 3.4 5 3.4 C5.6 3.4 6.8 3.2 7 2.6 C7.4 1.4 6 1 5 3.4" fill="none" stroke="#3a3f45" stroke-width="0.8"/></svg>
<svg class="r" style="left:951.15px;top:327.25px;" width="9.5" height="9.5" viewBox="0 0 10 10"><path d="M5 1 C3.2 1.2 2.8 2.6 2.8 4.2 L2.8 6.2 L1.6 7.6 L8.4 7.6 L7.2 6.2 L7.2 4.2 C7.2 2.6 6.8 1.2 5 1Z M4 8.6 C4.4 9.2 5.6 9.2 6 8.6" fill="none" stroke="#3a3f45" stroke-width="0.8"/></svg>
<svg class="r" style="left:972.35px;top:327.25px;" width="9.5" height="9.5" viewBox="0 0 10 10"><path d="M5 0.9 L8.4 2.2 C8.4 5.6 7.2 7.8 5 9.1 C2.8 7.8 1.6 5.6 1.6 2.2 Z" fill="none" stroke="#3a3f45" stroke-width="0.8"/></svg>
<svg class="r" style="left:993.55px;top:327.25px;" width="9.5" height="9.5" viewBox="0 0 10 10"><path d="M1.4 4 L1.4 6.4 L3 6.4 L7.6 8.6 L7.6 1.8 L3 4 Z M3 6.4 L3.8 9" fill="none" stroke="#cfd2d6" stroke-width="0.8"/><circle cx="8.6" cy="1.2" r="1.1" fill="#d9dce0"/></svg>
<svg class="r" style="left:1014.85px;top:327.25px;" width="9.5" height="9.5" viewBox="0 0 10 10"><circle cx="5" cy="5" r="4" fill="none" stroke="#3a3f45" stroke-width="0.8"/><path d="M3.7 3.9 C3.7 2.4 6.3 2.4 6.3 3.9 C6.3 4.9 5 4.9 5 6" fill="none" stroke="#3a3f45" stroke-width="0.8"/><circle cx="5" cy="7.3" r="0.5" fill="#3a3f45"/></svg>
<svg class="r" style="left:1037.50px;top:327.50px;" width="12" height="10" viewBox="0 0 12 10"><text x="0.5" y="8.4" font-family="Liberation Sans" font-size="8.2" fill="#3a3f45" letter-spacing="-0.8">2/6</text></svg>
<svg class="r" style="left:1066.90px;top:324.00px;" width="16" height="16" viewBox="0 0 16 16"><circle cx="8" cy="8" r="7.8" fill="#0c141c"/><circle cx="8" cy="6.3" r="2" fill="none" stroke="#fff" stroke-width="0.8"/><path d="M4.5 11.5 C4.7 9.5 11.3 9.5 11.5 11.5" fill="none" stroke="#fff" stroke-width="0.8"/></svg>
<svg class="r" style="left:1095.50px;top:327.00px;" width="10" height="10" viewBox="0 0 10 10"><circle cx="1.8" cy="1.8" r="0.95" fill="#111"/><circle cx="1.8" cy="5.0" r="0.95" fill="#111"/><circle cx="1.8" cy="8.2" r="0.95" fill="#111"/><circle cx="5.0" cy="1.8" r="0.95" fill="#111"/><circle cx="5.0" cy="5.0" r="0.95" fill="#111"/><circle cx="5.0" cy="8.2" r="0.95" fill="#111"/><circle cx="8.2" cy="1.8" r="0.95" fill="#111"/><circle cx="8.2" cy="5.0" r="0.95" fill="#111"/><circle cx="8.2" cy="8.2" r="0.95" fill="#111"/></svg>
<div class="r" style="left:103.20px;top:345.10px;width:25.80px;height:491.90px;background:#0e1b26"></div>
<div class="r" style="left:129.00px;top:345.10px;width:111.00px;height:491.90px;background:#1a2435"></div>
<svg class="r" style="left:111.30px;top:351.30px;" width="9.2" height="9.2" viewBox="0 0 10 10"><path d="M5 0.8 L9.6 4.9 L8.3 4.9 L8.3 9.2 L6.1 9.2 L6.1 6.6 L3.9 6.6 L3.9 9.2 L1.7 9.2 L1.7 4.9 L0.4 4.9 Z" fill="#3dbb5a"/></svg>
<div class="t" style="left:100.90px;width:30px;text-align:center;top:363.00px;font-size:5.1px;line-height:5.1px;color:#8f99a3;font-weight:400;letter-spacing:-0.15px;-webkit-text-stroke-width:0.25px;">Home</div>
<svg class="r" style="left:111.30px;top:376.15px;" width="9.2" height="9.2" viewBox="0 0 10 10"><path d="M5 0.6 C3.2 0.9 2.6 2.4 2.6 4.2 L2.6 6.4 L1.4 7.9 L8.6 7.9 L7.4 6.4 L7.4 4.2 C7.4 2.4 6.8 0.9 5 0.6 Z M3.9 8.5 L6.1 8.5 C6 9.4 4 9.4 3.9 8.5Z" fill="#f2f3f4"/></svg>
<div class="t" style="left:100.90px;width:30px;text-align:center;top:388.00px;font-size:5.1px;line-height:5.1px;color:#e9ebed;font-weight:400;letter-spacing:-0.15px;-webkit-text-stroke-width:0.25px;">Alarms</div>
<svg class="r" style="left:111.30px;top:401.00px;" width="9.2" height="9.2" viewBox="0 0 10 10"><circle cx="5" cy="5" r="4.3" fill="#f2f3f4"/><path d="M2.2 3.2 C3.2 3.4 3.6 4.3 4.6 4.6 C4.6 5.6 3.6 5.8 3.2 6.8 C2.4 6 1.8 4.4 2.2 3.2Z M6 1.4 C5.6 2.4 6.4 3 7.4 2.8 C7.8 2.6 6.8 1.6 6 1.4Z M5.6 6.2 C6.6 6.2 7.6 6.6 7.4 7.6 C6.8 8.4 5.8 8.8 5.2 8.6 C5.6 7.8 5 7 5.6 6.2Z" fill="#0e1b26"/></svg>
<div class="t" style="left:100.90px;width:30px;text-align:center;top:412.00px;font-size:5.1px;line-height:5.1px;color:#e9ebed;font-weight:400;letter-spacing:-0.15px;-webkit-text-stroke-width:0.25px;">Web</div>
<svg class="r" style="left:111.30px;top:425.85px;" width="9.2" height="9.2" viewBox="0 0 10 10"><g fill="none" stroke="#f2f3f4" stroke-width="1.3"><circle cx="2.9" cy="5.8" r="2"/><circle cx="7.1" cy="5.8" r="2"/></g><path d="M1.2 4.6 C1.6 2.8 3 2.4 5 3.2 C7 2.4 8.4 2.8 8.8 4.6 L5 4.4Z" fill="#f2f3f4"/></svg>
<div class="t" style="left:100.90px;width:30px;text-align:center;top:437.00px;font-size:5.1px;line-height:5.1px;color:#e9ebed;font-weight:400;letter-spacing:-0.15px;-webkit-text-stroke-width:0.25px;">APM</div>
<svg class="r" style="left:111.30px;top:450.70px;" width="9.2" height="9.2" viewBox="0 0 10 10"><g fill="#f2f3f4"><rect x="1.8" y="0.8" width="6.4" height="2.4" rx="0.7"/><rect x="1.8" y="3.8" width="6.4" height="2.4" rx="0.7"/><rect x="1.8" y="6.8" width="6.4" height="2.4" rx="0.7"/></g></svg>
<div class="t" style="left:100.90px;width:30px;text-align:center;top:462.00px;font-size:5.1px;line-height:5.1px;color:#e9ebed;font-weight:400;letter-spacing:-0.15px;-webkit-text-stroke-width:0.25px;">Server</div>
<svg class="r" style="left:111.30px;top:475.55px;" width="9.2" height="9.2" viewBox="0 0 10 10"><path d="M3.4 0.6 L3.4 3 L2.4 3 L2.4 5.6 C2.4 6.8 3.4 7.4 4.4 7.6 L4.4 9.6 L5.6 9.6 L5.6 7.6 C6.6 7.4 7.6 6.8 7.6 5.6 L7.6 3 L6.6 3 L6.6 0.6 L5.8 0.6 L5.8 3 L4.2 3 L4.2 0.6Z" fill="#f2f3f4"/></svg>
<div class="t" style="left:100.90px;width:30px;text-align:center;top:487.00px;font-size:5.1px;line-height:5.1px;color:#e9ebed;font-weight:400;letter-spacing:-0.15px;-webkit-text-stroke-width:0.25px;">Plugins</div>
<svg class="r" style="left:111.30px;top:500.40px;" width="9.2" height="9.2" viewBox="0 0 10 10"><path d="M5 0.5 L8.6 2.3 L9.5 6.2 L7 9.4 L3 9.4 L0.5 6.2 L1.4 2.3Z" fill="#f2f3f4"/><circle cx="5" cy="5.2" r="2.2" fill="none" stroke="#0e1b26" stroke-width="0.8"/><path d="M5 2 L5 8.4 M2 4.2 L8 6.2 M8 4.2 L2 6.2" stroke="#0e1b26" stroke-width="0.6"/></svg>
<div class="t" style="left:100.90px;width:30px;text-align:center;top:512.00px;font-size:5.1px;line-height:5.1px;color:#e9ebed;font-weight:400;letter-spacing:-0.15px;-webkit-text-stroke-width:0.25px;">K8s</div>
<svg class="r" style="left:111.30px;top:525.25px;" width="9.2" height="9.2" viewBox="0 0 10 10"><g fill="none" stroke="#f2f3f4" stroke-width="1"><rect x="3.5" y="0.9" width="5.6" height="5.6" rx="0.6"/><rect x="0.9" y="3.5" width="5.6" height="5.6" rx="0.6"/></g></svg>
<div class="t" style="left:100.90px;width:30px;text-align:center;top:537.00px;font-size:5.1px;line-height:5.1px;color:#e9ebed;font-weight:400;letter-spacing:-0.15px;-webkit-text-stroke-width:0.25px;">VMware</div>
<svg class="r" style="left:111.30px;top:550.10px;" width="9.2" height="9.2" viewBox="0 0 10 10"><path d="M2.6 8 C1.2 8 0.6 7 0.6 6.2 C0.6 5.2 1.4 4.6 2.2 4.6 C2.4 3 3.6 2.2 5 2.2 C6.6 2.2 7.6 3.4 7.8 4.6 C8.8 4.6 9.4 5.4 9.4 6.3 C9.4 7.2 8.7 8 7.6 8Z" fill="#f2f3f4"/></svg>
<div class="t" style="left:100.90px;width:30px;text-align:center;top:561.00px;font-size:5.1px;line-height:5.1px;color:#e9ebed;font-weight:400;letter-spacing:-0.15px;-webkit-text-stroke-width:0.25px;">Cloud</div>
<svg class="r" style="left:111.30px;top:574.95px;" width="9.2" height="9.2" viewBox="0 0 10 10"><g fill="#f2f3f4"><rect x="3.6" y="0.6" width="2.8" height="2.4"/><rect x="0.6" y="6.8" width="2.8" height="2.4"/><rect x="6.6" y="6.8" width="2.8" height="2.4"/></g><path d="M5 3 L5 5 M2 6.8 L2 5 L8 5 L8 6.8" fill="none" stroke="#f2f3f4" stroke-width="0.8"/></svg>
<div class="t" style="left:100.90px;width:30px;text-align:center;top:586.00px;font-size:5.1px;line-height:5.1px;color:#e9ebed;font-weight:400;letter-spacing:-0.15px;-webkit-text-stroke-width:0.25px;">Network</div>
<svg class="r" style="left:111.30px;top:599.80px;" width="9.2" height="9.2" viewBox="0 0 10 10"><path d="M2.4 6 C1.2 6 0.6 5.2 0.6 4.5 C0.6 3.7 1.2 3.2 2 3.2 C2.2 1.8 3.4 1 4.8 1 C6.4 1 7.4 2 7.6 3.2 C8.6 3.2 9.4 3.8 9.4 4.6 C9.4 5.4 8.8 6 7.8 6Z" fill="#f2f3f4"/><path d="M3 6.4 L2.4 9 M5 6.4 L5 9.4 M7 6.4 L7.6 9" stroke="#f2f3f4" stroke-width="0.7"/></svg>
<div class="t" style="left:100.90px;width:30px;text-align:center;top:611.00px;font-size:5.1px;line-height:5.1px;color:#e9ebed;font-weight:400;letter-spacing:-0.15px;-webkit-text-stroke-width:0.25px;">SDN</div>
<svg class="r" style="left:111.30px;top:624.65px;" width="9.2" height="9.2" viewBox="0 0 10 10"><circle cx="4.8" cy="5" r="4" fill="#f2f3f4"/><path d="M2 3.4 C3 3.6 3.6 4.6 4.4 4.8 C4.2 6 3.2 6 2.8 7 C2 6 1.6 4.6 2 3.4Z" fill="#0e1b26"/><rect x="6" y="5.6" width="3.6" height="3.6" fill="#f2f3f4" stroke="#0e1b26" stroke-width="0.6"/></svg>
<div class="t" style="left:100.90px;width:30px;text-align:center;top:636.00px;font-size:5.1px;line-height:5.1px;color:#e9ebed;font-weight:400;letter-spacing:-0.15px;-webkit-text-stroke-width:0.25px;">RUM</div>
<svg class="r" style="left:111.30px;top:649.50px;" width="9.2" height="9.2" viewBox="0 0 10 10"><rect x="1.8" y="0.6" width="6.4" height="8.8" rx="0.6" fill="#f2f3f4"/><path d="M3 2.4 H7 M3 4 H5.5 M3.4 6.2 L4.4 7.2 L6.6 5.2" stroke="#0e1b26" stroke-width="0.7" fill="none"/></svg>
<div class="t" style="left:100.90px;width:30px;text-align:center;top:661.00px;font-size:5.1px;line-height:5.1px;color:#e9ebed;font-weight:400;letter-spacing:-0.15px;-webkit-text-stroke-width:0.25px;">AppLogs</div>
<svg class="r" style="left:111.30px;top:674.35px;" width="9.2" height="9.2" viewBox="0 0 10 10"><rect x="0.8" y="0.8" width="8.4" height="6" fill="#f2f3f4"/><path d="M3.2 5.4 L3.2 3.6 M5 5.4 L5 2.2 M6.8 5.4 L6.8 4" stroke="#0e1b26" stroke-width="0.8"/><path d="M5 6.8 L5 8 M3 9.6 L5 7.8 L7 9.6" stroke="#f2f3f4" stroke-width="0.8" fill="none"/></svg>
<div class="t" style="left:100.90px;width:30px;text-align:center;top:686.00px;font-size:5.1px;line-height:5.1px;color:#e9ebed;font-weight:400;letter-spacing:-0.15px;-webkit-text-stroke-width:0.25px;">Reports</div>
<svg class="r" style="left:111.30px;top:699.20px;" width="9.2" height="9.2" viewBox="0 0 10 10"><g stroke="#f2f3f4" stroke-width="1.1" stroke-linecap="round"><line x1="7.60" y1="5.00" x2="9.30" y2="5.00"/><line x1="6.84" y1="6.84" x2="8.04" y2="8.04"/><line x1="5.00" y1="7.60" x2="5.00" y2="9.30"/><line x1="3.16" y1="6.84" x2="1.96" y2="8.04"/><line x1="2.40" y1="5.00" x2="0.70" y2="5.00"/><line x1="3.16" y1="3.16" x2="1.96" y2="1.96"/><line x1="5.00" y1="2.40" x2="5.00" y2="0.70"/><line x1="6.84" y1="3.16" x2="8.04" y2="1.96"/></g><circle cx="5" cy="5" r="2.5" fill="none" stroke="#f2f3f4" stroke-width="1.1"/></svg>
<div class="t" style="left:100.90px;width:30px;text-align:center;top:711.00px;font-size:5.1px;line-height:5.1px;color:#e9ebed;font-weight:400;letter-spacing:-0.15px;-webkit-text-stroke-width:0.25px;">Admin</div>
<div class="r" style="left:117.00px;top:374.90px;width:9.00px;height:5.80px;background:#e8385c;border-radius:3px"></div>
<div class="t" style="left:100.90px;width:30px;text-align:center;top:806.00px;font-size:5px;line-height:5px;color:#f0f0f0;font-weight:400;letter-spacing:-0.25px;">4:27 PM</div>
<div class="t" style="left:100.90px;width:30px;text-align:center;top:813.00px;font-size:5px;line-height:5px;color:#f0f0f0;font-weight:400;letter-spacing:-0.25px;">5 Dec, 25</div>
<div class="r" style="left:129.00px;top:380.10px;width:111.00px;height:17.50px;background-color:#1f2b3e;background-image:radial-gradient(circle,#3f5270 0.45px,transparent 0.8px);background-size:2.8px 2.8px"></div>
<div class="t" style="left:133.60px;top:351.00px;font-size:7.1px;line-height:7.1px;color:#eef0f3;font-weight:400;letter-spacing:-0.22px;">Help Assistant</div>
<div class="t" style="left:133.60px;top:369.00px;font-size:7.1px;line-height:7.1px;color:#eef0f3;font-weight:400;letter-spacing:-0.22px;">Dashboards</div>
<div class="t" style="left:133.60px;top:386.00px;font-size:7.1px;line-height:7.1px;color:#eef0f3;font-weight:400;letter-spacing:-0.22px;">Monitors</div>
<div class="t" style="left:133.60px;top:404.00px;font-size:7.1px;line-height:7.1px;color:#eef0f3;font-weight:400;letter-spacing:-0.22px;">Monitor Groups</div>
<div class="t" style="left:133.60px;top:422.00px;font-size:7.1px;line-height:7.1px;color:#eef0f3;font-weight:400;letter-spacing:-0.22px;">Capacity Planning</div>
<div class="t" style="left:133.60px;top:439.00px;font-size:7.1px;line-height:7.1px;color:#eef0f3;font-weight:400;letter-spacing:-0.22px;">Outages</div>
<div class="t" style="left:133.60px;top:457.00px;font-size:7.1px;line-height:7.1px;color:#eef0f3;font-weight:400;letter-spacing:-0.22px;">Zia Anomaly Dashboard</div>
<div class="t" style="left:133.60px;top:475.00px;font-size:7.1px;line-height:7.1px;color:#eef0f3;font-weight:400;letter-spacing:-0.22px;">Schedule Maintenance</div>
<div class="t" style="left:133.60px;top:492.00px;font-size:7.1px;line-height:7.1px;color:#eef0f3;font-weight:400;letter-spacing:-0.22px;">Schedule IT Automation</div>
<div class="t" style="left:133.60px;top:510.00px;font-size:7.1px;line-height:7.1px;color:#eef0f3;font-weight:400;letter-spacing:-0.22px;">Log Report</div>
<div class="t" style="left:133.60px;top:528.00px;font-size:7.1px;line-height:7.1px;color:#eef0f3;font-weight:400;letter-spacing:-0.22px;">Alert Logs</div>
<div class="t" style="left:133.60px;top:545.00px;font-size:7.1px;line-height:7.1px;color:#eef0f3;font-weight:400;letter-spacing:-0.22px;">IT Automation Logs</div>
<div class="t" style="left:133.60px;top:563.00px;font-size:7.1px;line-height:7.1px;color:#eef0f3;font-weight:400;letter-spacing:-0.22px;">SLO</div>
<svg class="r" style="left:228.40px;top:385.30px;" width="7" height="7" viewBox="0 0 7 7"><path d="M3.5 0.6 V6.4 M0.6 3.5 H6.4" stroke="#9aa3ae" stroke-width="0.9"/></svg>
<div class="r" style="left:240.00px;top:345.10px;width:875.00px;height:491.90px;background:#fff;border-left:1px solid #e6e8eb"></div>
<svg class="r" style="left:252.90px;top:347.50px;" width="13" height="13" viewBox="0 0 13 13"><circle cx="6.5" cy="6.5" r="6.3" fill="#4a525c"/><path d="M3.4 3.4 L9.6 9.6 M9.6 3.4 L3.4 9.6" stroke="#e8e9eb" stroke-width="0.9"/><g fill="#e33b5c"><circle cx="4" cy="2.2" r="0.6"/><circle cx="8.6" cy="2.6" r="0.6"/><circle cx="10.6" cy="6" r="0.6"/><circle cx="8.8" cy="10.4" r="0.6"/><circle cx="4.4" cy="10.6" r="0.6"/><circle cx="2" cy="7" r="0.6"/></g></svg>
<div class="t" style="left:270.70px;top:350.00px;font-size:10.4px;line-height:10.4px;color:#26292d;font-weight:400;letter-spacing:-0.3px;">linux-extn-test</div>
<svg class="r" style="left:336.20px;top:351.00px;" width="8" height="7" viewBox="0 0 8 7"><path d="M0.5 1 H7.5 M0.5 3.5 H7.5 M0.5 6 H7.5" stroke="#444" stroke-width="1"/></svg>
<div class="t" style="left:350.20px;top:352.00px;font-size:8.2px;line-height:8.2px;color:#3b3f44;font-weight:400;letter-spacing:-0.5px;background:linear-gradient(90deg,#2f3337 0%,#3b3f44 45%,#8d9298 75%,#d5d8dc 100%);-webkit-background-clip:text;background-clip:text;color:transparent;">GAdfsvNdRdsMeccMsNGaccNeMdcNcMsMAcCdbMALcGedicNsMcNsaNs</div>
<div class="t" style="left:270.70px;top:365.00px;font-size:5.6px;line-height:5.6px;color:#3c6fd1;font-weight:400;letter-spacing:-0.2px;">Azure Virtual Machine</div>
<div class="r" style="left:326.90px;top:363.60px;width:56.50px;height:7.80px;background:#f6f7f8;border:1px solid #e6e8eb;border-radius:2px"></div>
<div class="r" style="left:328.80px;top:365.50px;width:3.60px;height:4.00px;background:#666;border-radius:0.5px"></div>
<div class="t" style="left:334.60px;top:365.00px;font-size:5.6px;line-height:5.6px;color:#333;font-weight:400;letter-spacing:-0.25px;background:linear-gradient(90deg,#333 40%,#aaa 100%);-webkit-background-clip:text;background-clip:text;color:transparent;">serviceTjlitrutnmv</div>
<div class="t" style="left:391.00px;top:365.00px;font-size:5.4px;line-height:5.4px;color:#c5c9cd;font-weight:400;letter-spacing:-0.2px;background:linear-gradient(90deg,#c0c4c9 0%,#d8dbde 60%,#eceef0 100%);-webkit-background-clip:text;background-clip:text;color:transparent;">vrtsvistiaNomnsr intSNsteNtsts  nrtdNrtsitonaNtinsnsti snsnrsi sNst</div>
<div class="t" style="left:253.50px;top:381.00px;font-size:6.9px;line-height:6.9px;color:#34383d;font-weight:400;letter-spacing:-0.12px;">Summary</div>
<div class="t" style="left:290.60px;top:381.00px;font-size:6.9px;line-height:6.9px;color:#34383d;font-weight:400;letter-spacing:-0.12px;">Configuration Details</div>
<div class="t" style="left:362.10px;top:381.00px;font-size:6.9px;line-height:6.9px;color:#34383d;font-weight:400;letter-spacing:-0.12px;">Zia Forecast</div>
<div class="t" style="left:406.20px;top:381.00px;font-size:6.9px;line-height:6.9px;color:#34383d;font-weight:400;letter-spacing:-0.12px;">Outages</div>
<div class="t" style="left:439.60px;top:381.00px;font-size:6.9px;line-height:6.9px;color:#34383d;font-weight:400;letter-spacing:-0.12px;">Notes</div>
<div class="t" style="left:465.00px;top:381.00px;font-size:6.9px;line-height:6.9px;color:#34383d;font-weight:400;letter-spacing:-0.12px;">Log Report</div>
<div class="t" style="left:506.20px;top:381.00px;font-size:6.9px;line-height:6.9px;color:#34383d;font-weight:400;letter-spacing:-0.12px;">Alert Logs</div>
<div class="t" style="left:543.70px;top:381.00px;font-size:6.9px;line-height:6.9px;color:#34383d;font-weight:400;letter-spacing:-0.12px;">Plugin Integrations</div>
<div class="r" style="left:462.10px;top:392.00px;width:39.20px;height:1.80px;background:#3f4b50"></div>
<div class="r" style="left:913.90px;top:349.30px;width:102.80px;height:16.40px;background:#fff;border:1px solid #d5d8dc;border-radius:2px"></div>
<div class="t" style="left:916.80px;top:355.00px;font-size:6.9px;line-height:6.9px;color:#26292d;font-weight:400;letter-spacing:-0.1px;">Last 24 Hours</div>
<svg class="r" style="left:1007.80px;top:356.00px;" width="4.4" height="3" viewBox="0 0 4.4 3"><path d="M0 0 H4.4 L2.2 3Z" fill="#333"/></svg>
<div class="r" style="left:1021.10px;top:349.30px;width:15.80px;height:16.40px;background:#fff;border:1px solid #d5d8dc;border-radius:2px"></div>
<svg class="r" style="left:1025.00px;top:353.50px;" width="8" height="8" viewBox="0 0 8 8"><path d="M5.5 6.8 H0.8 V1.2 H3 L3.8 2.2 H7.2 V4.4" fill="none" stroke="#333" stroke-width="0.8"/><path d="M6.2 5 V7.6 M5 6.3 H7.4" stroke="#333" stroke-width="0.8"/></svg>
<div class="t" style="left:1036.90px;top:353.00px;font-size:6.9px;line-height:6.9px;color:#3863c0;font-weight:400;letter-spacing:-0.06px;">Trigger Test Alert</div>
<div class="r" style="left:986.40px;top:373.00px;width:56.70px;height:11.60px;background:#e3e5e8;border-radius:2px"></div>
<div class="t" style="left:986.75px;width:56px;text-align:center;top:376.00px;font-size:6.5px;line-height:6.5px;color:#2d3136;font-weight:400;letter-spacing:-0.1px;">Add Custom Tab</div>
<div class="r" style="left:1048.50px;top:372.40px;width:57.80px;height:13.60px;background:#e5e7ea;border:1px solid #c7ccd1;border-radius:2px"></div>
<svg class="r" style="left:1052.60px;top:376.20px;" width="6" height="6" viewBox="0 0 6 6"><circle cx="3" cy="3" r="2.3" fill="none" stroke="#555" stroke-width="0.7" stroke-dasharray="2 0.6"/></svg>
<div class="t" style="left:1061.50px;top:377.00px;font-size:6.8px;line-height:6.8px;color:#2d3136;font-weight:400;letter-spacing:-0.1px;">Incident Chat</div>
<div class="r" style="left:240.80px;top:392.70px;width:874.20px;height:444.30px;background:#f3f3f4"></div>
<div class="r" style="left:248.40px;top:397.30px;width:860.40px;height:434.70px;background:#fff"></div>
<div class="r" style="left:1025.30px;top:403.30px;width:59.80px;height:16.00px;background:#e4e6e9;border-radius:2px"></div>
<div class="t" style="left:1025.20px;width:60px;text-align:center;top:408.00px;font-size:7px;line-height:7px;color:#2d3136;font-weight:400;letter-spacing:-0.05px;">Download CSV</div>
<div class="r" style="left:1088.00px;top:403.30px;width:16.80px;height:16.00px;background:#e4e6e9;border-radius:2px"></div>
<svg class="r" style="left:1092.90px;top:408.10px;" width="7.7" height="5.8" viewBox="0 0 7.7 5.8"><rect x="0" y="0" width="7.7" height="5.8" fill="#8e9297"/><rect x="0" y="0" width="7.7" height="1.8" fill="#0f1a2a"/><rect x="2.8" y="0" width="2" height="5.8" fill="#0f1a2a"/></svg>
<svg class="r" style="left:252.60px;top:406.20px;" width="6.4" height="7" viewBox="0 0 6.4 7"><path d="M0.6 0.8 H5.8 L3.8 3.6 V6.2 L2.6 5.4 V3.6Z" fill="none" stroke="#555" stroke-width="0.7"/></svg>
<div class="t" style="left:264.40px;top:409.00px;font-size:6.9px;line-height:6.9px;color:#3a3e43;font-weight:400;letter-spacing:-0.1px;">From</div>
<div class="r" style="left:280.50px;top:403.60px;width:103.70px;height:15.90px;background:#fff;border:1px solid #d9dce0;border-radius:2.5px"></div>
<div class="t" style="left:286.60px;top:408.00px;font-size:7.4px;line-height:7.4px;color:#2c3035;font-weight:400;letter-spacing:0.1px;">04/12/<span style="color:#8e9399">2025</span>, 04:19 PM</div>
<svg class="r" style="left:371.60px;top:408.40px;" width="6" height="6.4" viewBox="0 0 6 6.4"><rect x="0.5" y="1" width="5" height="5" rx="0.6" fill="none" stroke="#333" stroke-width="0.8"/><rect x="0.5" y="1" width="5" height="1.6" fill="#333"/></svg>
<div class="t" style="left:391.80px;top:409.00px;font-size:6.9px;line-height:6.9px;color:#3a3e43;font-weight:400;letter-spacing:-0.1px;">To</div>
<div class="r" style="left:399.60px;top:403.60px;width:104.60px;height:15.90px;background:#fff;border:1px solid #d9dce0;border-radius:2.5px"></div>
<div class="t" style="left:405.70px;top:408.00px;font-size:7.4px;line-height:7.4px;color:#2c3035;font-weight:400;letter-spacing:0.1px;">05/12/<span style="color:#8e9399">2025</span>, 04:19 PM</div>
<svg class="r" style="left:491.00px;top:408.40px;" width="6" height="6.4" viewBox="0 0 6 6.4"><rect x="0.5" y="1" width="5" height="5" rx="0.6" fill="none" stroke="#333" stroke-width="0.8"/><rect x="0.5" y="1" width="5" height="1.6" fill="#333"/></svg>
<div class="r" style="left:512.20px;top:403.60px;width:53.30px;height:15.90px;background:#fff;border:1px solid #d9dce0;border-radius:2.5px"></div>
<svg class="r" style="left:518.40px;top:408.40px;" width="6" height="6" viewBox="0 0 6 6"><circle cx="3" cy="3" r="2.6" fill="#333"/><path d="M3 1.6 V4.4 M1.6 3 H4.4" stroke="#fff" stroke-width="0.8"/></svg>
<div class="t" style="left:527.20px;top:409.00px;font-size:6.9px;line-height:6.9px;color:#2c3035;font-weight:400;letter-spacing:-0.12px;">Availability</div>
<div class="r" style="left:574.00px;top:403.60px;width:32.00px;height:15.90px;background:#eef0f3;border:1px solid #aeb9cc;border-radius:2.5px"></div>
<div class="t" style="left:574.00px;width:32px;text-align:center;top:409.00px;font-size:6.9px;line-height:6.9px;color:#2c3035;font-weight:400;letter-spacing:-0.1px;">Ask Zia</div>
<div class="t" style="left:256.90px;top:429.00px;font-size:6.6px;line-height:6.6px;color:#2b2f33;font-weight:700;letter-spacing:-0.2px;">Collection Time</div>
<div class="t" style="left:362.70px;top:429.00px;font-size:6.6px;line-height:6.6px;color:#2b2f33;font-weight:700;letter-spacing:-0.2px;">Status</div>
<div class="t" style="left:391.10px;top:429.00px;font-size:6.6px;line-height:6.6px;color:#2b2f33;font-weight:700;letter-spacing:-0.2px;">Percentage CPU</div>
<div class="t" style="left:453.80px;top:429.00px;font-size:6.6px;line-height:6.6px;color:#2b2f33;font-weight:700;letter-spacing:-0.2px;">Network In Total</div>
<div class="t" style="left:516.70px;top:429.00px;font-size:6.6px;line-height:6.6px;color:#2b2f33;font-weight:700;letter-spacing:-0.2px;">Network Out Total</div>
<div class="t" style="left:585.20px;top:429.00px;font-size:6.6px;line-height:6.6px;color:#2b2f33;font-weight:700;letter-spacing:-0.2px;">Disk Read Bytes</div>
<div class="t" style="left:646.60px;top:429.00px;font-size:6.6px;line-height:6.6px;color:#2b2f33;font-weight:700;letter-spacing:-0.2px;">Disk Write Bytes</div>
<div class="t" style="left:708.60px;top:429.00px;font-size:6.6px;line-height:6.6px;color:#2b2f33;font-weight:700;letter-spacing:-0.2px;">Reason</div>
<svg class="r" style="left:733.00px;top:428.20px;" width="7.4" height="6.4" viewBox="0 0 7.4 6.4"><path d="M0.4 1 H6.6 M0.4 3.2 H5.6 M0.4 5.4 H3.2" stroke="#444" stroke-width="0.75" fill="none"/><path d="M5.6 3.2 C7.2 3.2 7.2 5.4 5.6 5.4 H4.6 M5.2 4.7 L4.5 5.4 L5.2 6.1" stroke="#444" stroke-width="0.6" fill="none"/></svg>
<svg class="r" style="left:353.50px;top:434.80px;" width="4" height="4" viewBox="0 0 4 4"><path d="M0.4 3.6 L3.6 0.4 M2 3.6 L3.6 2" stroke="#888" stroke-width="0.5"/></svg>
<svg class="r" style="left:382.20px;top:434.80px;" width="4" height="4" viewBox="0 0 4 4"><path d="M0.4 3.6 L3.6 0.4 M2 3.6 L3.6 2" stroke="#888" stroke-width="0.5"/></svg>
<svg class="r" style="left:444.60px;top:434.80px;" width="4" height="4" viewBox="0 0 4 4"><path d="M0.4 3.6 L3.6 0.4 M2 3.6 L3.6 2" stroke="#888" stroke-width="0.5"/></svg>
<svg class="r" style="left:507.60px;top:434.80px;" width="4" height="4" viewBox="0 0 4 4"><path d="M0.4 3.6 L3.6 0.4 M2 3.6 L3.6 2" stroke="#888" stroke-width="0.5"/></svg>
<svg class="r" style="left:576.40px;top:434.80px;" width="4" height="4" viewBox="0 0 4 4"><path d="M0.4 3.6 L3.6 0.4 M2 3.6 L3.6 2" stroke="#888" stroke-width="0.5"/></svg>
<svg class="r" style="left:636.80px;top:434.80px;" width="4" height="4" viewBox="0 0 4 4"><path d="M0.4 3.6 L3.6 0.4 M2 3.6 L3.6 2" stroke="#888" stroke-width="0.5"/></svg>
<svg class="r" style="left:698.60px;top:434.80px;" width="4" height="4" viewBox="0 0 4 4"><path d="M0.4 3.6 L3.6 0.4 M2 3.6 L3.6 2" stroke="#888" stroke-width="0.5"/></svg>
<div class="r" style="left:252.00px;top:440.00px;width:852.80px;height:0.90px;background:#e7e9ec"></div>
<div class="r" style="left:386.20px;top:440.50px;width:1.30px;height:388.50px;background:#e4e6e9"></div>
<div class="t" style="left:256.90px;top:445.00px;font-size:6.9px;line-height:6.9px;color:#34383c;font-weight:400;letter-spacing:-0.25px;">Dec 5, 2025 4:11:00 PM</div>
<svg class="r" style="left:364.90px;top:443.20px;" width="8.2" height="8.2" viewBox="0 0 8.2 8.2"><circle cx="4.1" cy="4.1" r="4.1" fill="#ea3a5d"/><path d="M4.1 1.8 V5.6 M2.6 4.2 L4.1 5.9 L5.6 4.2" fill="none" stroke="#fff" stroke-width="1.1"/></svg>
<div class="t" style="left:391.10px;top:445.00px;font-size:6.6px;line-height:6.6px;color:#34383c;font-weight:400;letter-spacing:-0.22px;">2.98</div>
<div class="t" style="left:453.80px;top:445.00px;font-size:6.6px;line-height:6.6px;color:#34383c;font-weight:400;letter-spacing:-0.22px;">81,926</div>
<div class="t" style="left:516.70px;top:445.00px;font-size:6.6px;line-height:6.6px;color:#34383c;font-weight:400;letter-spacing:-0.22px;">108,852</div>
<div class="t" style="left:585.20px;top:445.00px;font-size:6.6px;line-height:6.6px;color:#34383c;font-weight:400;letter-spacing:-0.22px;">0</div>
<div class="t" style="left:646.60px;top:445.00px;font-size:6.6px;line-height:6.6px;color:#34383c;font-weight:400;letter-spacing:-0.22px;">-</div>
<div class="t" style="left:708.60px;top:445.00px;font-size:6.7px;line-height:6.7px;color:#34383c;font-weight:400;letter-spacing:-0.01px;">The Virtual Machine is stopping as requested by an...</div>
<div class="r" style="left:252.00px;top:454.70px;width:852.80px;height:0.80px;background:#f2f3f5"></div>
<div class="t" style="left:256.90px;top:460.00px;font-size:6.9px;line-height:6.9px;color:#34383c;font-weight:400;letter-spacing:-0.25px;">Dec 5, 2025 4:10:00 PM</div>
<svg class="r" style="left:364.90px;top:458.88px;" width="8.2" height="8.2" viewBox="0 0 8.2 8.2"><circle cx="4.1" cy="4.1" r="4.1" fill="#ea3a5d"/><path d="M4.1 1.8 V5.6 M2.6 4.2 L4.1 5.9 L5.6 4.2" fill="none" stroke="#fff" stroke-width="1.1"/></svg>
<div class="t" style="left:391.10px;top:460.00px;font-size:6.6px;line-height:6.6px;color:#34383c;font-weight:400;letter-spacing:-0.22px;">2.73</div>
<div class="t" style="left:453.80px;top:460.00px;font-size:6.6px;line-height:6.6px;color:#34383c;font-weight:400;letter-spacing:-0.22px;">90,240</div>
<div class="t" style="left:516.70px;top:460.00px;font-size:6.6px;line-height:6.6px;color:#34383c;font-weight:400;letter-spacing:-0.22px;">112,081</div>
<div class="t" style="left:585.20px;top:460.00px;font-size:6.6px;line-height:6.6px;color:#34383c;font-weight:400;letter-spacing:-0.22px;">0</div>
<div class="t" style="left:646.60px;top:460.00px;font-size:6.6px;line-height:6.6px;color:#34383c;font-weight:400;letter-spacing:-0.22px;">1,196,557.31</div>
<div class="t" style="left:708.60px;top:460.00px;font-size:6.7px;line-height:6.7px;color:#34383c;font-weight:400;letter-spacing:-0.01px;">The Virtual Machine is stopping as requested by an...</div>
<div class="r" style="left:252.00px;top:470.38px;width:852.80px;height:0.80px;background:#f2f3f5"></div>
<div class="t" style="left:256.90px;top:476.00px;font-size:6.9px;line-height:6.9px;color:#34383c;font-weight:400;letter-spacing:-0.25px;">Dec 5, 2025 4:09:00 PM</div>
<svg class="r" style="left:364.90px;top:474.56px;" width="8.2" height="8.2" viewBox="0 0 8.2 8.2"><circle cx="4.1" cy="4.1" r="4.1" fill="#ea3a5d"/><path d="M4.1 1.8 V5.6 M2.6 4.2 L4.1 5.9 L5.6 4.2" fill="none" stroke="#fff" stroke-width="1.1"/></svg>
<div class="t" style="left:391.10px;top:476.00px;font-size:6.6px;line-height:6.6px;color:#34383c;font-weight:400;letter-spacing:-0.22px;">3.37</div>
<div class="t" style="left:453.80px;top:476.00px;font-size:6.6px;line-height:6.6px;color:#34383c;font-weight:400;letter-spacing:-0.22px;">74,043</div>
<div class="t" style="left:516.70px;top:476.00px;font-size:6.6px;line-height:6.6px;color:#34383c;font-weight:400;letter-spacing:-0.22px;">-</div>
<div class="t" style="left:585.20px;top:476.00px;font-size:6.6px;line-height:6.6px;color:#34383c;font-weight:400;letter-spacing:-0.22px;">0</div>
<div class="t" style="left:646.60px;top:476.00px;font-size:6.6px;line-height:6.6px;color:#34383c;font-weight:400;letter-spacing:-0.22px;">-</div>
<div class="t" style="left:708.60px;top:476.00px;font-size:6.7px;line-height:6.7px;color:#34383c;font-weight:400;letter-spacing:-0.01px;">The Virtual Machine is stopping as requested by an...</div>
<div class="r" style="left:252.00px;top:486.06px;width:852.80px;height:0.80px;background:#f2f3f5"></div>
<div class="t" style="left:256.90px;top:492.00px;font-size:6.9px;line-height:6.9px;color:#34383c;font-weight:400;letter-spacing:-0.25px;">Dec 5, 2025 4:08:00 PM</div>
<svg class="r" style="left:364.90px;top:490.24px;" width="8.2" height="8.2" viewBox="0 0 8.2 8.2"><circle cx="4.1" cy="4.1" r="4.1" fill="#ea3a5d"/><path d="M4.1 1.8 V5.6 M2.6 4.2 L4.1 5.9 L5.6 4.2" fill="none" stroke="#fff" stroke-width="1.1"/></svg>
<div class="t" style="left:391.10px;top:492.00px;font-size:6.6px;line-height:6.6px;color:#34383c;font-weight:400;letter-spacing:-0.22px;">2.57</div>
<div class="t" style="left:453.80px;top:492.00px;font-size:6.6px;line-height:6.6px;color:#34383c;font-weight:400;letter-spacing:-0.22px;">72,057</div>
<div class="t" style="left:516.70px;top:492.00px;font-size:6.6px;line-height:6.6px;color:#34383c;font-weight:400;letter-spacing:-0.22px;">91,981</div>
<div class="t" style="left:585.20px;top:492.00px;font-size:6.6px;line-height:6.6px;color:#34383c;font-weight:400;letter-spacing:-0.22px;">0</div>
<div class="t" style="left:646.60px;top:492.00px;font-size:6.6px;line-height:6.6px;color:#34383c;font-weight:400;letter-spacing:-0.22px;">-</div>
<div class="t" style="left:708.60px;top:492.00px;font-size:6.7px;line-height:6.7px;color:#34383c;font-weight:400;letter-spacing:-0.01px;">The Virtual Machine is stopping as requested by an...</div>
<div class="r" style="left:252.00px;top:501.74px;width:852.80px;height:0.80px;background:#f2f3f5"></div>
<div class="t" style="left:256.90px;top:507.00px;font-size:6.9px;line-height:6.9px;color:#34383c;font-weight:400;letter-spacing:-0.25px;">Dec 5, 2025 4:07:00 PM</div>
<svg class="r" style="left:364.90px;top:505.92px;" width="8.2" height="8.2" viewBox="0 0 8.2 8.2"><circle cx="4.1" cy="4.1" r="4.1" fill="#ea3a5d"/><path d="M4.1 1.8 V5.6 M2.6 4.2 L4.1 5.9 L5.6 4.2" fill="none" stroke="#fff" stroke-width="1.1"/></svg>
<div class="t" style="left:391.10px;top:507.00px;font-size:6.6px;line-height:6.6px;color:#34383c;font-weight:400;letter-spacing:-0.22px;">2.47</div>
<div class="t" style="left:453.80px;top:507.00px;font-size:6.6px;line-height:6.6px;color:#34383c;font-weight:400;letter-spacing:-0.22px;">70,263</div>
<div class="t" style="left:516.70px;top:507.00px;font-size:6.6px;line-height:6.6px;color:#34383c;font-weight:400;letter-spacing:-0.22px;">84,008</div>
<div class="t" style="left:585.20px;top:507.00px;font-size:6.6px;line-height:6.6px;color:#34383c;font-weight:400;letter-spacing:-0.22px;">-</div>
<div class="t" style="left:646.60px;top:507.00px;font-size:6.6px;line-height:6.6px;color:#34383c;font-weight:400;letter-spacing:-0.22px;">1,536,696.49</div>
<div class="t" style="left:708.60px;top:507.00px;font-size:6.7px;line-height:6.7px;color:#34383c;font-weight:400;letter-spacing:-0.01px;">The Virtual Machine is stopping as requested by an...</div>
<div class="r" style="left:252.00px;top:517.42px;width:852.80px;height:0.80px;background:#f2f3f5"></div>
<div class="t" style="left:256.90px;top:523.00px;font-size:6.9px;line-height:6.9px;color:#34383c;font-weight:400;letter-spacing:-0.25px;">Dec 5, 2025 4:06:00 PM</div>
<svg class="r" style="left:364.90px;top:521.60px;" width="8.2" height="8.2" viewBox="0 0 8.2 8.2"><circle cx="4.1" cy="4.1" r="4.1" fill="#ea3a5d"/><path d="M4.1 1.8 V5.6 M2.6 4.2 L4.1 5.9 L5.6 4.2" fill="none" stroke="#fff" stroke-width="1.1"/></svg>
<div class="t" style="left:391.10px;top:523.00px;font-size:6.6px;line-height:6.6px;color:#34383c;font-weight:400;letter-spacing:-0.22px;">2.99</div>
<div class="t" style="left:453.80px;top:523.00px;font-size:6.6px;line-height:6.6px;color:#34383c;font-weight:400;letter-spacing:-0.22px;">81,345</div>
<div class="t" style="left:516.70px;top:523.00px;font-size:6.6px;line-height:6.6px;color:#34383c;font-weight:400;letter-spacing:-0.22px;">105,350</div>
<div class="t" style="left:585.20px;top:523.00px;font-size:6.6px;line-height:6.6px;color:#34383c;font-weight:400;letter-spacing:-0.22px;">0</div>
<div class="t" style="left:646.60px;top:523.00px;font-size:6.6px;line-height:6.6px;color:#34383c;font-weight:400;letter-spacing:-0.22px;">-</div>
<div class="t" style="left:708.60px;top:523.00px;font-size:6.7px;line-height:6.7px;color:#34383c;font-weight:400;letter-spacing:-0.01px;">The Virtual Machine is stopping as requested by an...</div>
<div class="r" style="left:252.00px;top:533.10px;width:852.80px;height:0.80px;background:#f2f3f5"></div>
<div class="t" style="left:256.90px;top:539.00px;font-size:6.9px;line-height:6.9px;color:#34383c;font-weight:400;letter-spacing:-0.25px;">Dec 5, 2025 4:05:00 PM</div>
<svg class="r" style="left:364.90px;top:537.28px;" width="8.2" height="8.2" viewBox="0 0 8.2 8.2"><circle cx="4.1" cy="4.1" r="4.1" fill="#ea3a5d"/><path d="M4.1 1.8 V5.6 M2.6 4.2 L4.1 5.9 L5.6 4.2" fill="none" stroke="#fff" stroke-width="1.1"/></svg>
<div class="t" style="left:391.10px;top:539.00px;font-size:6.6px;line-height:6.6px;color:#34383c;font-weight:400;letter-spacing:-0.22px;">-</div>
<div class="t" style="left:453.80px;top:539.00px;font-size:6.6px;line-height:6.6px;color:#34383c;font-weight:400;letter-spacing:-0.22px;">-</div>
<div class="t" style="left:516.70px;top:539.00px;font-size:6.6px;line-height:6.6px;color:#34383c;font-weight:400;letter-spacing:-0.22px;">107,422</div>
<div class="t" style="left:585.20px;top:539.00px;font-size:6.6px;line-height:6.6px;color:#34383c;font-weight:400;letter-spacing:-0.22px;">0</div>
<div class="t" style="left:646.60px;top:539.00px;font-size:6.6px;line-height:6.6px;color:#34383c;font-weight:400;letter-spacing:-0.22px;">1,647,088.15</div>
<div class="t" style="left:708.60px;top:539.00px;font-size:6.7px;line-height:6.7px;color:#34383c;font-weight:400;letter-spacing:-0.01px;">The Virtual Machine is stopping as requested by an...</div>
<div class="r" style="left:252.00px;top:548.78px;width:852.80px;height:0.80px;background:#f2f3f5"></div>
<div class="t" style="left:256.90px;top:554.00px;font-size:6.9px;line-height:6.9px;color:#34383c;font-weight:400;letter-spacing:-0.25px;">Dec 5, 2025 4:04:00 PM</div>
<svg class="r" style="left:364.90px;top:552.96px;" width="8.2" height="8.2" viewBox="0 0 8.2 8.2"><circle cx="4.1" cy="4.1" r="4.1" fill="#3fbf5b"/><path d="M4.1 6.4 V2.6 M2.6 4 L4.1 2.3 L5.6 4" fill="none" stroke="#fff" stroke-width="1.1"/></svg>
<div class="t" style="left:391.10px;top:554.00px;font-size:6.6px;line-height:6.6px;color:#34383c;font-weight:400;letter-spacing:-0.22px;">3.42</div>
<div class="t" style="left:453.80px;top:554.00px;font-size:6.6px;line-height:6.6px;color:#34383c;font-weight:400;letter-spacing:-0.22px;">79,232</div>
<div class="t" style="left:516.70px;top:554.00px;font-size:6.6px;line-height:6.6px;color:#34383c;font-weight:400;letter-spacing:-0.22px;">94,243</div>
<div class="t" style="left:585.20px;top:554.00px;font-size:6.6px;line-height:6.6px;color:#34383c;font-weight:400;letter-spacing:-0.22px;">-</div>
<div class="t" style="left:646.60px;top:554.00px;font-size:6.6px;line-height:6.6px;color:#34383c;font-weight:400;letter-spacing:-0.22px;">-</div>
<div class="t" style="left:708.60px;top:554.00px;font-size:6.7px;line-height:6.7px;color:#34383c;font-weight:400;letter-spacing:-0.01px;">-</div>
<div class="r" style="left:252.00px;top:564.46px;width:852.80px;height:0.80px;background:#f2f3f5"></div>
<div class="t" style="left:256.90px;top:570.00px;font-size:6.9px;line-height:6.9px;color:#34383c;font-weight:400;letter-spacing:-0.25px;">Dec 5, 2025 4:03:00 PM</div>
<svg class="r" style="left:364.90px;top:568.64px;" width="8.2" height="8.2" viewBox="0 0 8.2 8.2"><circle cx="4.1" cy="4.1" r="4.1" fill="#3fbf5b"/><path d="M4.1 6.4 V2.6 M2.6 4 L4.1 2.3 L5.6 4" fill="none" stroke="#fff" stroke-width="1.1"/></svg>
<div class="t" style="left:391.10px;top:570.00px;font-size:6.6px;line-height:6.6px;color:#34383c;font-weight:400;letter-spacing:-0.22px;">2.64</div>
<div class="t" style="left:453.80px;top:570.00px;font-size:6.6px;line-height:6.6px;color:#34383c;font-weight:400;letter-spacing:-0.22px;">76,503</div>
<div class="t" style="left:516.70px;top:570.00px;font-size:6.6px;line-height:6.6px;color:#34383c;font-weight:400;letter-spacing:-0.22px;">96,903</div>
<div class="t" style="left:585.20px;top:570.00px;font-size:6.6px;line-height:6.6px;color:#34383c;font-weight:400;letter-spacing:-0.22px;">0</div>
<div class="t" style="left:646.60px;top:570.00px;font-size:6.6px;line-height:6.6px;color:#34383c;font-weight:400;letter-spacing:-0.22px;">1,708,953.12</div>
<div class="t" style="left:708.60px;top:570.00px;font-size:6.7px;line-height:6.7px;color:#34383c;font-weight:400;letter-spacing:-0.01px;">-</div>
<div class="r" style="left:252.00px;top:580.14px;width:852.80px;height:0.80px;background:#f2f3f5"></div>
<div class="t" style="left:256.90px;top:586.00px;font-size:6.9px;line-height:6.9px;color:#34383c;font-weight:400;letter-spacing:-0.25px;">Dec 5, 2025 4:02:00 PM</div>
<svg class="r" style="left:364.90px;top:584.32px;" width="8.2" height="8.2" viewBox="0 0 8.2 8.2"><circle cx="4.1" cy="4.1" r="4.1" fill="#3fbf5b"/><path d="M4.1 6.4 V2.6 M2.6 4 L4.1 2.3 L5.6 4" fill="none" stroke="#fff" stroke-width="1.1"/></svg>
<div class="t" style="left:391.10px;top:586.00px;font-size:6.6px;line-height:6.6px;color:#34383c;font-weight:400;letter-spacing:-0.22px;">-</div>
<div class="t" style="left:453.80px;top:586.00px;font-size:6.6px;line-height:6.6px;color:#34383c;font-weight:400;letter-spacing:-0.22px;">71,808</div>
<div class="t" style="left:516.70px;top:586.00px;font-size:6.6px;line-height:6.6px;color:#34383c;font-weight:400;letter-spacing:-0.22px;">93,665</div>
<div class="t" style="left:585.20px;top:586.00px;font-size:6.6px;line-height:6.6px;color:#34383c;font-weight:400;letter-spacing:-0.22px;">135,154.92</div>
<div class="t" style="left:646.60px;top:586.00px;font-size:6.6px;line-height:6.6px;color:#34383c;font-weight:400;letter-spacing:-0.22px;">-</div>
<div class="t" style="left:708.60px;top:586.00px;font-size:6.7px;line-height:6.7px;color:#34383c;font-weight:400;letter-spacing:-0.01px;">-</div>
<div class="r" style="left:252.00px;top:595.82px;width:852.80px;height:0.80px;background:#f2f3f5"></div>
<div class="t" style="left:256.90px;top:601.00px;font-size:6.9px;line-height:6.9px;color:#34383c;font-weight:400;letter-spacing:-0.25px;">Dec 5, 2025 4:01:00 PM</div>
<svg class="r" style="left:364.90px;top:600.00px;" width="8.2" height="8.2" viewBox="0 0 8.2 8.2"><circle cx="4.1" cy="4.1" r="4.1" fill="#3fbf5b"/><path d="M4.1 6.4 V2.6 M2.6 4 L4.1 2.3 L5.6 4" fill="none" stroke="#fff" stroke-width="1.1"/></svg>
<div class="t" style="left:391.10px;top:601.00px;font-size:6.6px;line-height:6.6px;color:#34383c;font-weight:400;letter-spacing:-0.22px;">2.84</div>
<div class="t" style="left:453.80px;top:601.00px;font-size:6.6px;line-height:6.6px;color:#34383c;font-weight:400;letter-spacing:-0.22px;">82,309</div>
<div class="t" style="left:516.70px;top:601.00px;font-size:6.6px;line-height:6.6px;color:#34383c;font-weight:400;letter-spacing:-0.22px;">-</div>
<div class="t" style="left:585.20px;top:601.00px;font-size:6.6px;line-height:6.6px;color:#34383c;font-weight:400;letter-spacing:-0.22px;">0</div>
<div class="t" style="left:646.60px;top:601.00px;font-size:6.6px;line-height:6.6px;color:#34383c;font-weight:400;letter-spacing:-0.22px;">1,442,406.39</div>
<div class="t" style="left:708.60px;top:601.00px;font-size:6.7px;line-height:6.7px;color:#34383c;font-weight:400;letter-spacing:-0.01px;">-</div>
<div class="r" style="left:252.00px;top:611.50px;width:852.80px;height:0.80px;background:#f2f3f5"></div>
<div class="t" style="left:256.90px;top:617.00px;font-size:6.9px;line-height:6.9px;color:#34383c;font-weight:400;letter-spacing:-0.25px;">Dec 5, 2025 4:00:00 PM</div>
<svg class="r" style="left:364.90px;top:615.68px;" width="8.2" height="8.2" viewBox="0 0 8.2 8.2"><circle cx="4.1" cy="4.1" r="4.1" fill="#3fbf5b"/><path d="M4.1 6.4 V2.6 M2.6 4 L4.1 2.3 L5.6 4" fill="none" stroke="#fff" stroke-width="1.1"/></svg>
<div class="t" style="left:391.10px;top:617.00px;font-size:6.6px;line-height:6.6px;color:#34383c;font-weight:400;letter-spacing:-0.22px;">2.5</div>
<div class="t" style="left:453.80px;top:617.00px;font-size:6.6px;line-height:6.6px;color:#34383c;font-weight:400;letter-spacing:-0.22px;">70,639</div>
<div class="t" style="left:516.70px;top:617.00px;font-size:6.6px;line-height:6.6px;color:#34383c;font-weight:400;letter-spacing:-0.22px;">94,523</div>
<div class="t" style="left:585.20px;top:617.00px;font-size:6.6px;line-height:6.6px;color:#34383c;font-weight:400;letter-spacing:-0.22px;">0</div>
<div class="t" style="left:646.60px;top:617.00px;font-size:6.6px;line-height:6.6px;color:#34383c;font-weight:400;letter-spacing:-0.22px;">938,733.4</div>
<div class="t" style="left:708.60px;top:617.00px;font-size:6.7px;line-height:6.7px;color:#34383c;font-weight:400;letter-spacing:-0.01px;">-</div>
<div class="r" style="left:252.00px;top:627.18px;width:852.80px;height:0.80px;background:#f2f3f5"></div>
<div class="t" style="left:256.90px;top:633.00px;font-size:6.9px;line-height:6.9px;color:#34383c;font-weight:400;letter-spacing:-0.25px;">Dec 5, 2025 3:59:00 PM</div>
<svg class="r" style="left:364.90px;top:631.36px;" width="8.2" height="8.2" viewBox="0 0 8.2 8.2"><circle cx="4.1" cy="4.1" r="4.1" fill="#3fbf5b"/><path d="M4.1 6.4 V2.6 M2.6 4 L4.1 2.3 L5.6 4" fill="none" stroke="#fff" stroke-width="1.1"/></svg>
<div class="t" style="left:391.10px;top:633.00px;font-size:6.6px;line-height:6.6px;color:#34383c;font-weight:400;letter-spacing:-0.22px;">3.15</div>
<div class="t" style="left:453.80px;top:633.00px;font-size:6.6px;line-height:6.6px;color:#34383c;font-weight:400;letter-spacing:-0.22px;">63,245</div>
<div class="t" style="left:516.70px;top:633.00px;font-size:6.6px;line-height:6.6px;color:#34383c;font-weight:400;letter-spacing:-0.22px;">80,955</div>
<div class="t" style="left:585.20px;top:633.00px;font-size:6.6px;line-height:6.6px;color:#34383c;font-weight:400;letter-spacing:-0.22px;">0</div>
<div class="t" style="left:646.60px;top:633.00px;font-size:6.6px;line-height:6.6px;color:#34383c;font-weight:400;letter-spacing:-0.22px;">1,229,290.23</div>
<div class="t" style="left:708.60px;top:633.00px;font-size:6.7px;line-height:6.7px;color:#34383c;font-weight:400;letter-spacing:-0.01px;">-</div>
<div class="r" style="left:252.00px;top:642.86px;width:852.80px;height:0.80px;background:#f2f3f5"></div>
<div class="t" style="left:256.90px;top:649.00px;font-size:6.9px;line-height:6.9px;color:#34383c;font-weight:400;letter-spacing:-0.25px;">Dec 5, 2025 3:58:00 PM</div>
<svg class="r" style="left:364.90px;top:647.04px;" width="8.2" height="8.2" viewBox="0 0 8.2 8.2"><circle cx="4.1" cy="4.1" r="4.1" fill="#3fbf5b"/><path d="M4.1 6.4 V2.6 M2.6 4 L4.1 2.3 L5.6 4" fill="none" stroke="#fff" stroke-width="1.1"/></svg>
<div class="t" style="left:391.10px;top:648.00px;font-size:6.6px;line-height:6.6px;color:#34383c;font-weight:400;letter-spacing:-0.22px;">2.46</div>
<div class="t" style="left:453.80px;top:648.00px;font-size:6.6px;line-height:6.6px;color:#34383c;font-weight:400;letter-spacing:-0.22px;">68,682</div>
<div class="t" style="left:516.70px;top:648.00px;font-size:6.6px;line-height:6.6px;color:#34383c;font-weight:400;letter-spacing:-0.22px;">80,251</div>
<div class="t" style="left:585.20px;top:648.00px;font-size:6.6px;line-height:6.6px;color:#34383c;font-weight:400;letter-spacing:-0.22px;">0</div>
<div class="t" style="left:646.60px;top:648.00px;font-size:6.6px;line-height:6.6px;color:#34383c;font-weight:400;letter-spacing:-0.22px;">1,093,603.33</div>
<div class="t" style="left:708.60px;top:648.00px;font-size:6.7px;line-height:6.7px;color:#34383c;font-weight:400;letter-spacing:-0.01px;">-</div>
<div class="r" style="left:252.00px;top:658.54px;width:852.80px;height:0.80px;background:#f2f3f5"></div>
<div class="t" style="left:256.90px;top:664.00px;font-size:6.9px;line-height:6.9px;color:#34383c;font-weight:400;letter-spacing:-0.25px;">Dec 5, 2025 3:57:00 PM</div>
<svg class="r" style="left:364.90px;top:662.72px;" width="8.2" height="8.2" viewBox="0 0 8.2 8.2"><circle cx="4.1" cy="4.1" r="4.1" fill="#3fbf5b"/><path d="M4.1 6.4 V2.6 M2.6 4 L4.1 2.3 L5.6 4" fill="none" stroke="#fff" stroke-width="1.1"/></svg>
<div class="t" style="left:391.10px;top:664.00px;font-size:6.6px;line-height:6.6px;color:#34383c;font-weight:400;letter-spacing:-0.22px;">2.48</div>
<div class="t" style="left:453.80px;top:664.00px;font-size:6.6px;line-height:6.6px;color:#34383c;font-weight:400;letter-spacing:-0.22px;">64,107</div>
<div class="t" style="left:516.70px;top:664.00px;font-size:6.6px;line-height:6.6px;color:#34383c;font-weight:400;letter-spacing:-0.22px;">80,185</div>
<div class="t" style="left:585.20px;top:664.00px;font-size:6.6px;line-height:6.6px;color:#34383c;font-weight:400;letter-spacing:-0.22px;">2,428,386.63</div>
<div class="t" style="left:646.60px;top:664.00px;font-size:6.6px;line-height:6.6px;color:#34383c;font-weight:400;letter-spacing:-0.22px;">1,294,871.33</div>
<div class="t" style="left:708.60px;top:664.00px;font-size:6.7px;line-height:6.7px;color:#34383c;font-weight:400;letter-spacing:-0.01px;">-</div>
<div class="r" style="left:252.00px;top:674.22px;width:852.80px;height:0.80px;background:#f2f3f5"></div>
<div class="t" style="left:256.90px;top:680.00px;font-size:6.9px;line-height:6.9px;color:#34383c;font-weight:400;letter-spacing:-0.25px;">Dec 5, 2025 3:56:00 PM</div>
<svg class="r" style="left:364.90px;top:678.40px;" width="8.2" height="8.2" viewBox="0 0 8.2 8.2"><circle cx="4.1" cy="4.1" r="4.1" fill="#3fbf5b"/><path d="M4.1 6.4 V2.6 M2.6 4 L4.1 2.3 L5.6 4" fill="none" stroke="#fff" stroke-width="1.1"/></svg>
<div class="t" style="left:391.10px;top:680.00px;font-size:6.6px;line-height:6.6px;color:#34383c;font-weight:400;letter-spacing:-0.22px;">2.72</div>
<div class="t" style="left:453.80px;top:680.00px;font-size:6.6px;line-height:6.6px;color:#34383c;font-weight:400;letter-spacing:-0.22px;">65,345</div>
<div class="t" style="left:516.70px;top:680.00px;font-size:6.6px;line-height:6.6px;color:#34383c;font-weight:400;letter-spacing:-0.22px;">82,922</div>
<div class="t" style="left:585.20px;top:680.00px;font-size:6.6px;line-height:6.6px;color:#34383c;font-weight:400;letter-spacing:-0.22px;">0</div>
<div class="t" style="left:646.60px;top:680.00px;font-size:6.6px;line-height:6.6px;color:#34383c;font-weight:400;letter-spacing:-0.22px;">1,225,359.96</div>
<div class="t" style="left:708.60px;top:680.00px;font-size:6.7px;line-height:6.7px;color:#34383c;font-weight:400;letter-spacing:-0.01px;">-</div>
<div class="r" style="left:252.00px;top:689.90px;width:852.80px;height:0.80px;background:#f2f3f5"></div>
<div class="t" style="left:256.90px;top:696.00px;font-size:6.9px;line-height:6.9px;color:#34383c;font-weight:400;letter-spacing:-0.25px;">Dec 5, 2025 3:55:00 PM</div>
<svg class="r" style="left:364.90px;top:694.08px;" width="8.2" height="8.2" viewBox="0 0 8.2 8.2"><circle cx="4.1" cy="4.1" r="4.1" fill="#3fbf5b"/><path d="M4.1 6.4 V2.6 M2.6 4 L4.1 2.3 L5.6 4" fill="none" stroke="#fff" stroke-width="1.1"/></svg>
<div class="t" style="left:391.10px;top:695.00px;font-size:6.6px;line-height:6.6px;color:#34383c;font-weight:400;letter-spacing:-0.22px;">-</div>
<div class="t" style="left:453.80px;top:695.00px;font-size:6.6px;line-height:6.6px;color:#34383c;font-weight:400;letter-spacing:-0.22px;">78,976</div>
<div class="t" style="left:516.70px;top:695.00px;font-size:6.6px;line-height:6.6px;color:#34383c;font-weight:400;letter-spacing:-0.22px;">98,354</div>
<div class="t" style="left:585.20px;top:695.00px;font-size:6.6px;line-height:6.6px;color:#34383c;font-weight:400;letter-spacing:-0.22px;">0</div>
<div class="t" style="left:646.60px;top:695.00px;font-size:6.6px;line-height:6.6px;color:#34383c;font-weight:400;letter-spacing:-0.22px;">1,459,110.06</div>
<div class="t" style="left:708.60px;top:695.00px;font-size:6.7px;line-height:6.7px;color:#34383c;font-weight:400;letter-spacing:-0.01px;">-</div>
<div class="r" style="left:252.00px;top:705.58px;width:852.80px;height:0.80px;background:#f2f3f5"></div>
<div class="t" style="left:256.90px;top:711.00px;font-size:6.9px;line-height:6.9px;color:#34383c;font-weight:400;letter-spacing:-0.25px;">Dec 5, 2025 3:54:00 PM</div>
<svg class="r" style="left:364.90px;top:709.76px;" width="8.2" height="8.2" viewBox="0 0 8.2 8.2"><circle cx="4.1" cy="4.1" r="4.1" fill="#3fbf5b"/><path d="M4.1 6.4 V2.6 M2.6 4 L4.1 2.3 L5.6 4" fill="none" stroke="#fff" stroke-width="1.1"/></svg>
<div class="t" style="left:391.10px;top:711.00px;font-size:6.6px;line-height:6.6px;color:#34383c;font-weight:400;letter-spacing:-0.22px;">3.07</div>
<div class="t" style="left:453.80px;top:711.00px;font-size:6.6px;line-height:6.6px;color:#34383c;font-weight:400;letter-spacing:-0.22px;">56,705</div>
<div class="t" style="left:516.70px;top:711.00px;font-size:6.6px;line-height:6.6px;color:#34383c;font-weight:400;letter-spacing:-0.22px;">73,023</div>
<div class="t" style="left:585.20px;top:711.00px;font-size:6.6px;line-height:6.6px;color:#34383c;font-weight:400;letter-spacing:-0.22px;">0</div>
<div class="t" style="left:646.60px;top:711.00px;font-size:6.6px;line-height:6.6px;color:#34383c;font-weight:400;letter-spacing:-0.22px;">762,458.09</div>
<div class="t" style="left:708.60px;top:711.00px;font-size:6.7px;line-height:6.7px;color:#34383c;font-weight:400;letter-spacing:-0.01px;">-</div>
<div class="r" style="left:252.00px;top:721.26px;width:852.80px;height:0.80px;background:#f2f3f5"></div>
<div class="t" style="left:256.90px;top:727.00px;font-size:6.9px;line-height:6.9px;color:#34383c;font-weight:400;letter-spacing:-0.25px;">Dec 5, 2025 3:53:00 PM</div>
<svg class="r" style="left:364.90px;top:725.44px;" width="8.2" height="8.2" viewBox="0 0 8.2 8.2"><circle cx="4.1" cy="4.1" r="4.1" fill="#3fbf5b"/><path d="M4.1 6.4 V2.6 M2.6 4 L4.1 2.3 L5.6 4" fill="none" stroke="#fff" stroke-width="1.1"/></svg>
<div class="t" style="left:391.10px;top:727.00px;font-size:6.6px;line-height:6.6px;color:#34383c;font-weight:400;letter-spacing:-0.22px;">2.34</div>
<div class="t" style="left:453.80px;top:727.00px;font-size:6.6px;line-height:6.6px;color:#34383c;font-weight:400;letter-spacing:-0.22px;">59,299</div>
<div class="t" style="left:516.70px;top:727.00px;font-size:6.6px;line-height:6.6px;color:#34383c;font-weight:400;letter-spacing:-0.22px;">75,836</div>
<div class="t" style="left:585.20px;top:727.00px;font-size:6.6px;line-height:6.6px;color:#34383c;font-weight:400;letter-spacing:-0.22px;">0</div>
<div class="t" style="left:646.60px;top:727.00px;font-size:6.6px;line-height:6.6px;color:#34383c;font-weight:400;letter-spacing:-0.22px;">-</div>
<div class="t" style="left:708.60px;top:727.00px;font-size:6.7px;line-height:6.7px;color:#34383c;font-weight:400;letter-spacing:-0.01px;">-</div>
<div class="r" style="left:252.00px;top:736.94px;width:852.80px;height:0.80px;background:#f2f3f5"></div>
<div class="t" style="left:256.90px;top:743.00px;font-size:6.9px;line-height:6.9px;color:#34383c;font-weight:400;letter-spacing:-0.25px;">Dec 5, 2025 3:52:00 PM</div>
<svg class="r" style="left:364.90px;top:741.12px;" width="8.2" height="8.2" viewBox="0 0 8.2 8.2"><circle cx="4.1" cy="4.1" r="4.1" fill="#3fbf5b"/><path d="M4.1 6.4 V2.6 M2.6 4 L4.1 2.3 L5.6 4" fill="none" stroke="#fff" stroke-width="1.1"/></svg>
<div class="t" style="left:391.10px;top:742.00px;font-size:6.6px;line-height:6.6px;color:#34383c;font-weight:400;letter-spacing:-0.22px;">2.44</div>
<div class="t" style="left:453.80px;top:742.00px;font-size:6.6px;line-height:6.6px;color:#34383c;font-weight:400;letter-spacing:-0.22px;">69,396</div>
<div class="t" style="left:516.70px;top:742.00px;font-size:6.6px;line-height:6.6px;color:#34383c;font-weight:400;letter-spacing:-0.22px;">80,389</div>
<div class="t" style="left:585.20px;top:742.00px;font-size:6.6px;line-height:6.6px;color:#34383c;font-weight:400;letter-spacing:-0.22px;">352,234.84</div>
<div class="t" style="left:646.60px;top:742.00px;font-size:6.6px;line-height:6.6px;color:#34383c;font-weight:400;letter-spacing:-0.22px;">-</div>
<div class="t" style="left:708.60px;top:743.00px;font-size:6.7px;line-height:6.7px;color:#34383c;font-weight:400;letter-spacing:-0.01px;">-</div>
<div class="r" style="left:252.00px;top:752.62px;width:852.80px;height:0.80px;background:#f2f3f5"></div>
<div class="t" style="left:256.90px;top:758.00px;font-size:6.9px;line-height:6.9px;color:#34383c;font-weight:400;letter-spacing:-0.25px;">Dec 5, 2025 3:51:00 PM</div>
<svg class="r" style="left:364.90px;top:756.80px;" width="8.2" height="8.2" viewBox="0 0 8.2 8.2"><circle cx="4.1" cy="4.1" r="4.1" fill="#3fbf5b"/><path d="M4.1 6.4 V2.6 M2.6 4 L4.1 2.3 L5.6 4" fill="none" stroke="#fff" stroke-width="1.1"/></svg>
<div class="t" style="left:391.10px;top:758.00px;font-size:6.6px;line-height:6.6px;color:#34383c;font-weight:400;letter-spacing:-0.22px;">2.75</div>
<div class="t" style="left:453.80px;top:758.00px;font-size:6.6px;line-height:6.6px;color:#34383c;font-weight:400;letter-spacing:-0.22px;">71,619</div>
<div class="t" style="left:516.70px;top:758.00px;font-size:6.6px;line-height:6.6px;color:#34383c;font-weight:400;letter-spacing:-0.22px;">90,368</div>
<div class="t" style="left:585.20px;top:758.00px;font-size:6.6px;line-height:6.6px;color:#34383c;font-weight:400;letter-spacing:-0.22px;">0</div>
<div class="t" style="left:646.60px;top:758.00px;font-size:6.6px;line-height:6.6px;color:#34383c;font-weight:400;letter-spacing:-0.22px;">996,171.03</div>
<div class="t" style="left:708.60px;top:758.00px;font-size:6.7px;line-height:6.7px;color:#34383c;font-weight:400;letter-spacing:-0.01px;">-</div>
<div class="r" style="left:252.00px;top:768.30px;width:852.80px;height:0.80px;background:#f2f3f5"></div>
<div class="t" style="left:256.90px;top:774.00px;font-size:6.9px;line-height:6.9px;color:#34383c;font-weight:400;letter-spacing:-0.25px;">Dec 5, 2025 3:50:00 PM</div>
<svg class="r" style="left:364.90px;top:772.48px;" width="8.2" height="8.2" viewBox="0 0 8.2 8.2"><circle cx="4.1" cy="4.1" r="4.1" fill="#3fbf5b"/><path d="M4.1 6.4 V2.6 M2.6 4 L4.1 2.3 L5.6 4" fill="none" stroke="#fff" stroke-width="1.1"/></svg>
<div class="t" style="left:391.10px;top:774.00px;font-size:6.6px;line-height:6.6px;color:#34383c;font-weight:400;letter-spacing:-0.22px;">2.39</div>
<div class="t" style="left:453.80px;top:774.00px;font-size:6.6px;line-height:6.6px;color:#34383c;font-weight:400;letter-spacing:-0.22px;">67,572</div>
<div class="t" style="left:516.70px;top:774.00px;font-size:6.6px;line-height:6.6px;color:#34383c;font-weight:400;letter-spacing:-0.22px;">91,986</div>
<div class="t" style="left:585.20px;top:774.00px;font-size:6.6px;line-height:6.6px;color:#34383c;font-weight:400;letter-spacing:-0.22px;">0</div>
<div class="t" style="left:646.60px;top:774.00px;font-size:6.6px;line-height:6.6px;color:#34383c;font-weight:400;letter-spacing:-0.22px;">1,212,900.64</div>
<div class="t" style="left:708.60px;top:774.00px;font-size:6.7px;line-height:6.7px;color:#34383c;font-weight:400;letter-spacing:-0.01px;">-</div>
<div class="r" style="left:252.00px;top:783.98px;width:852.80px;height:0.80px;background:#f2f3f5"></div>
<div class="t" style="left:256.90px;top:790.00px;font-size:6.9px;line-height:6.9px;color:#34383c;font-weight:400;letter-spacing:-0.25px;">Dec 5, 2025 3:49:00 PM</div>
<svg class="r" style="left:364.90px;top:788.16px;" width="8.2" height="8.2" viewBox="0 0 8.2 8.2"><circle cx="4.1" cy="4.1" r="4.1" fill="#3fbf5b"/><path d="M4.1 6.4 V2.6 M2.6 4 L4.1 2.3 L5.6 4" fill="none" stroke="#fff" stroke-width="1.1"/></svg>
<div class="t" style="left:391.10px;top:790.00px;font-size:6.6px;line-height:6.6px;color:#34383c;font-weight:400;letter-spacing:-0.22px;">-</div>
<div class="t" style="left:453.80px;top:790.00px;font-size:6.6px;line-height:6.6px;color:#34383c;font-weight:400;letter-spacing:-0.22px;">59,027</div>
<div class="t" style="left:516.70px;top:790.00px;font-size:6.6px;line-height:6.6px;color:#34383c;font-weight:400;letter-spacing:-0.22px;">75,591</div>
<div class="t" style="left:585.20px;top:790.00px;font-size:6.6px;line-height:6.6px;color:#34383c;font-weight:400;letter-spacing:-0.22px;">81,912.05</div>
<div class="t" style="left:646.60px;top:790.00px;font-size:6.6px;line-height:6.6px;color:#34383c;font-weight:400;letter-spacing:-0.22px;">1,561,128.54</div>
<div class="t" style="left:708.60px;top:790.00px;font-size:6.7px;line-height:6.7px;color:#34383c;font-weight:400;letter-spacing:-0.01px;">-</div>
<div class="r" style="left:252.00px;top:799.66px;width:852.80px;height:0.80px;background:#f2f3f5"></div>
<div class="t" style="left:256.90px;top:805.00px;font-size:6.9px;line-height:6.9px;color:#34383c;font-weight:400;letter-spacing:-0.25px;">Dec 5, 2025 3:48:00 PM</div>
<svg class="r" style="left:364.90px;top:803.84px;" width="8.2" height="8.2" viewBox="0 0 8.2 8.2"><circle cx="4.1" cy="4.1" r="4.1" fill="#3fbf5b"/><path d="M4.1 6.4 V2.6 M2.6 4 L4.1 2.3 L5.6 4" fill="none" stroke="#fff" stroke-width="1.1"/></svg>
<div class="t" style="left:391.10px;top:805.00px;font-size:6.6px;line-height:6.6px;color:#34383c;font-weight:400;letter-spacing:-0.22px;">2.6</div>
<div class="t" style="left:453.80px;top:805.00px;font-size:6.6px;line-height:6.6px;color:#34383c;font-weight:400;letter-spacing:-0.22px;">77,096</div>
<div class="t" style="left:516.70px;top:805.00px;font-size:6.6px;line-height:6.6px;color:#34383c;font-weight:400;letter-spacing:-0.22px;">89,561</div>
<div class="t" style="left:585.20px;top:805.00px;font-size:6.6px;line-height:6.6px;color:#34383c;font-weight:400;letter-spacing:-0.22px;">0</div>
<div class="t" style="left:646.60px;top:805.00px;font-size:6.6px;line-height:6.6px;color:#34383c;font-weight:400;letter-spacing:-0.22px;">1,282,887.89</div>
<div class="t" style="left:708.60px;top:805.00px;font-size:6.7px;line-height:6.7px;color:#34383c;font-weight:400;letter-spacing:-0.01px;">-</div>
<div class="r" style="left:252.00px;top:815.34px;width:852.80px;height:0.80px;background:#f2f3f5"></div>
<div class="t" style="left:256.90px;top:821.00px;font-size:6.9px;line-height:6.9px;color:#34383c;font-weight:400;letter-spacing:-0.25px;">Dec 5, 2025 3:47:00 PM</div>
<svg class="r" style="left:364.90px;top:819.52px;" width="8.2" height="8.2" viewBox="0 0 8.2 8.2"><circle cx="4.1" cy="4.1" r="4.1" fill="#3fbf5b"/><path d="M4.1 6.4 V2.6 M2.6 4 L4.1 2.3 L5.6 4" fill="none" stroke="#fff" stroke-width="1.1"/></svg>
<div class="t" style="left:391.10px;top:821.00px;font-size:6.6px;line-height:6.6px;color:#34383c;font-weight:400;letter-spacing:-0.22px;">2.44</div>
<div class="t" style="left:453.80px;top:821.00px;font-size:6.6px;line-height:6.6px;color:#34383c;font-weight:400;letter-spacing:-0.22px;">61,359</div>
<div class="t" style="left:516.70px;top:821.00px;font-size:6.6px;line-height:6.6px;color:#34383c;font-weight:400;letter-spacing:-0.22px;">78,559</div>
<div class="t" style="left:585.20px;top:821.00px;font-size:6.6px;line-height:6.6px;color:#34383c;font-weight:400;letter-spacing:-0.22px;">12,287.3</div>
<div class="t" style="left:646.60px;top:821.00px;font-size:6.6px;line-height:6.6px;color:#34383c;font-weight:400;letter-spacing:-0.22px;">1,081,986.45</div>
<div class="t" style="left:708.60px;top:821.00px;font-size:6.7px;line-height:6.7px;color:#34383c;font-weight:400;letter-spacing:-0.01px;">-</div>
</body></html>
